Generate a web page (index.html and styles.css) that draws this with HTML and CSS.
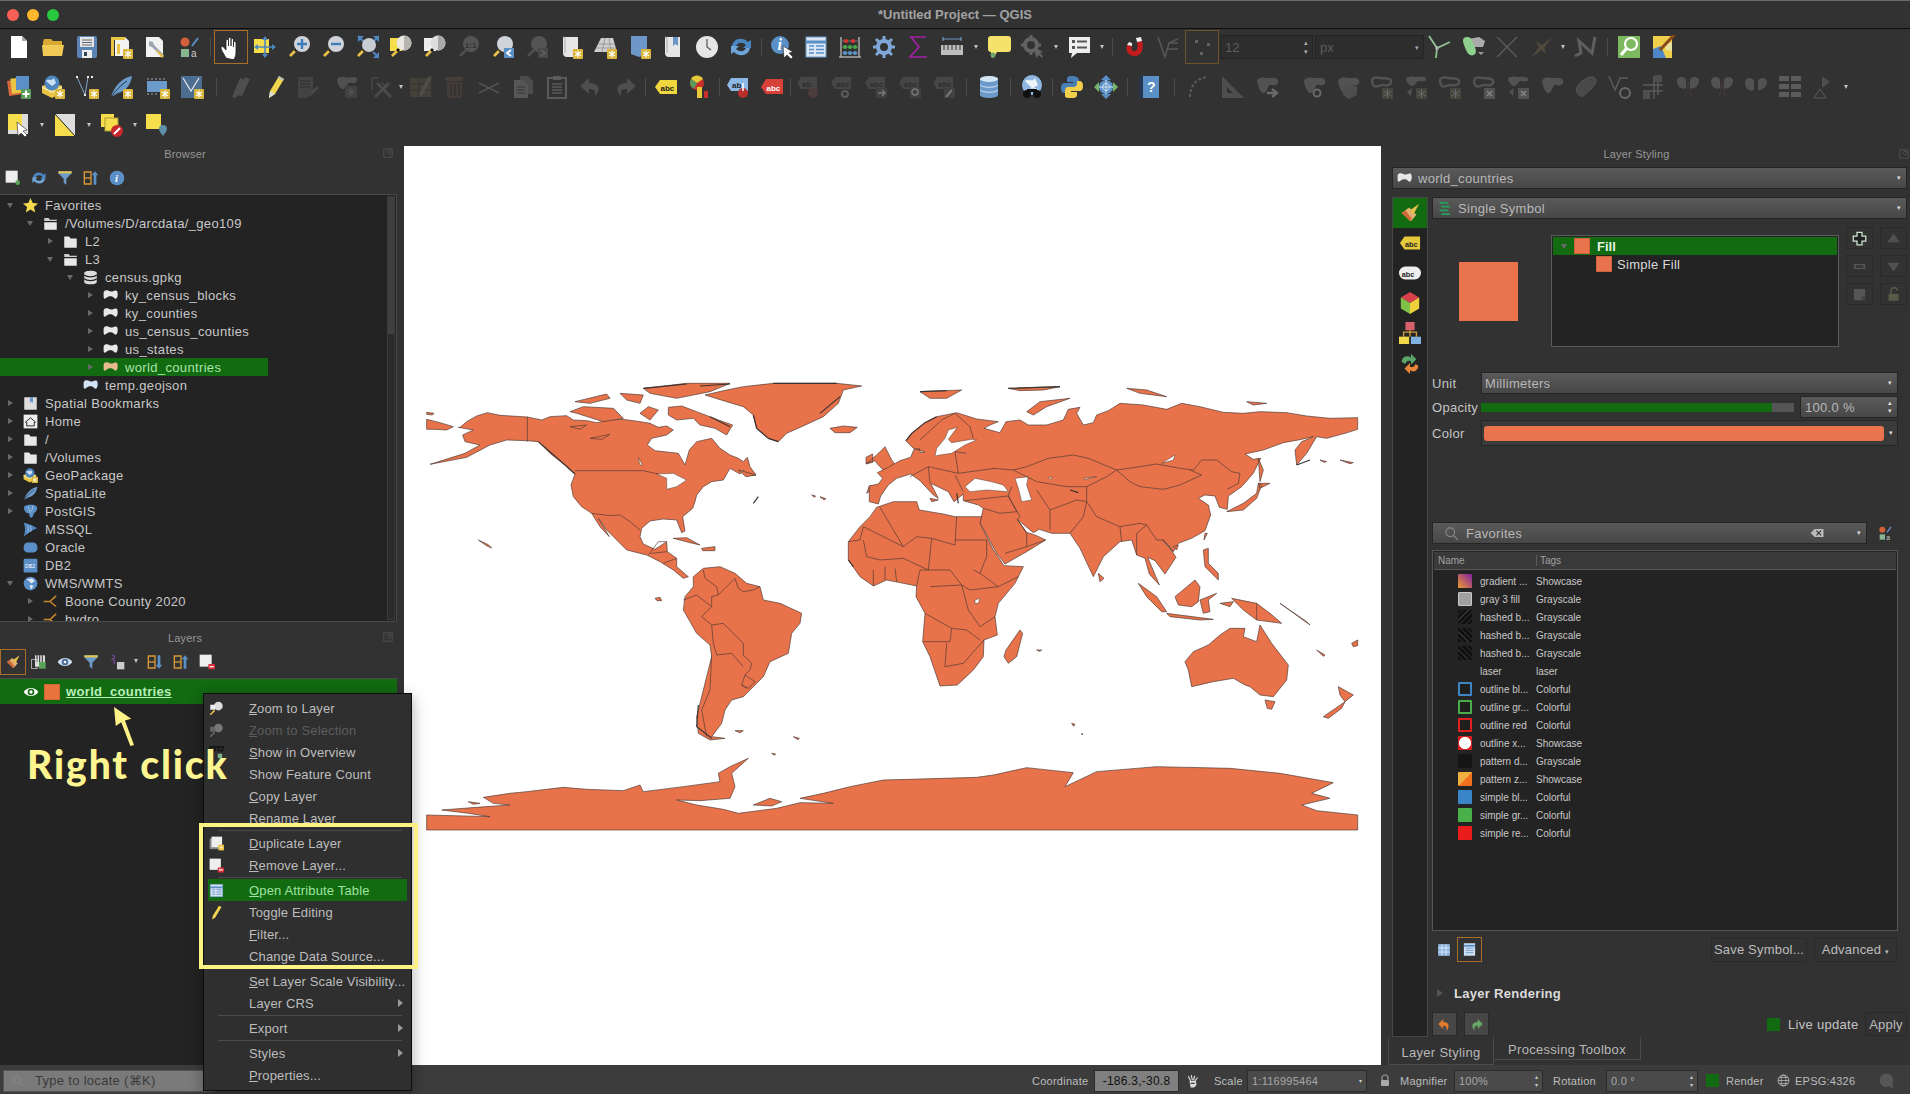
FILE: index.html
```html
<!DOCTYPE html>
<html lang="en">
<head>
    <meta charset="UTF-8">
    <title>*Untitled Project — QGIS</title>
    <link rel="stylesheet" href="styles.css">
</head>
<body>
<svg class="defs" aria-hidden="true">
    <defs>
        <g id="bdg"><rect x="14" y="14" width="10" height="10" rx="1" fill="#d9b63a"/><path d="M19 15.5v7M16 17l6 4M22 17l-6 4" stroke="#fff" stroke-width="1.2"/></g>
        <path id="blobp" d="M2 7c0-4 5-5 8-4s5 0 8 0 5 3 4 6-4 3-6 2-3 1-4 4-3 6-5 5-5-9-5-13z"/>
        <g id="glass"><path d="M9 15l-6 6" stroke="#e8c14a" stroke-width="2.6"/><path d="M10 14l-2 2" stroke="#111" stroke-width="2.6"/></g>
    </defs>
    <symbol id="i-new" viewBox="0 0 24 24"><path d="M4 1h11l5 5v17H4z" fill="#fff"/><path d="M15 1v5h5z" fill="#aaa"/></symbol>
    <symbol id="i-open" viewBox="0 0 24 24"><path d="M2 7l1-3h7l2 2h9v4H2z" fill="#d9a932"/><path d="M1 10h22l-2 11H2z" fill="#f2cb57"/></symbol>
    <symbol id="i-save" viewBox="0 0 24 24"><rect x="2" y="1" width="20" height="22" rx="2" fill="#5b83b3"/><rect x="5" y="2" width="14" height="10" fill="#e6e6e6"/><path d="M7 5h10M7 7.5h10M7 10h10" stroke="#667" stroke-width="1"/><rect x="7" y="15" width="10" height="8" fill="#eee"/><rect x="9" y="17" width="3" height="4" fill="#345"/></symbol>
    <symbol id="i-print" viewBox="0 0 24 24"><path d="M6 2h10l4 4v15H6z" fill="#f4f4f4"/><path d="M2 2h14v3H5v16H2z" fill="#e9c445"/><path d="M8 9h3v10H8z" fill="#e9c445"/><use href="#bdg"/></symbol>
    <symbol id="i-tools" viewBox="0 0 24 24"><path d="M3 2h13l4 4v16H3z" fill="#f2f2f2"/><path d="M6 6l4 1 1 3 10 10-2 2-10-10-3-1z" fill="#9ca3ad"/><path d="M14 15l7 6-2 2-6-7z" fill="#e2bf4b"/></symbol>
    <symbol id="i-style" viewBox="0 0 24 24"><circle cx="8" cy="7" r="4.5" fill="#d2603a"/><rect x="4" y="14" width="8" height="8" fill="#86b58e"/><path d="M15 11l6-8" stroke="#5e8fc4" stroke-width="2"/></symbol>
    <symbol id="i-pan" viewBox="0 0 24 24"><path d="M7 23C5 19 2 15 2 13c0-2 2-2 3-.5l2 2.5V6c0-2 2.500-2 2.500 0v5-7c0-2 2.500-2 2.500 0v7-6c0-2 2.500-2 2.500 0v7-4c0-2 2.500-2 2.500 0v9c0 4-1 5-2 8z" fill="#fff" stroke="#222" stroke-width=".8"/></symbol>
    <symbol id="i-pansel" viewBox="0 0 24 24"><rect x="1" y="4" width="15" height="14" fill="#f6dd4b"/><path d="M12 1l3 4H9zM12 23l3-4H9zM1 12l4-3v6zM23 12l-4-3v6z" fill="#4f86c0"/><path d="M12 5v14M5 12h14" stroke="#4f86c0" stroke-width="1.6"/></symbol>
    <symbol id="i-zin" viewBox="0 0 24 24"><use href="#glass"/><circle cx="15" cy="9" r="8" fill="#cfd3da"/><path d="M15 4v10M10 9h10" stroke="#3f7dbd" stroke-width="2.400"/></symbol>
    <symbol id="i-zout" viewBox="0 0 24 24"><use href="#glass"/><circle cx="15" cy="9" r="8" fill="#cfd3da"/><path d="M10 9h10" stroke="#3f7dbd" stroke-width="2.400"/></symbol>
    <symbol id="i-zfull" viewBox="0 0 24 24"><path d="M3 1h6L3 7zM24 1h-6l6 6zM24 17v6h-6z" fill="#4f86c0"/><path d="M3 1l6 6M24 1l-6 6M24 23l-6-6" stroke="#4f86c0" stroke-width="2"/><use href="#glass"/><circle cx="14" cy="10" r="7" fill="#c8ccd3"/></symbol>
    <symbol id="i-zsel" viewBox="0 0 24 24"><rect x="1" y="3" width="12" height="13" fill="#f6dd4b"/><use href="#glass"/><circle cx="15" cy="8" r="7.500" fill="#e8e8e0"/><path d="M15 .5a7.500 7.500 0 0 1 0 15z" fill="#b5b5ae"/></symbol>
    <symbol id="i-zlayer" viewBox="0 0 24 24"><rect x="1" y="3" width="12" height="13" fill="#eee"/><use href="#glass"/><circle cx="15" cy="8" r="7.500" fill="#ddd"/><path d="M15 .5a7.500 7.500 0 0 1 0 15z" fill="#aaa"/></symbol>
    <symbol id="i-znat" viewBox="0 0 24 24"><g opacity=".33"><path d="M9 15l-6 6" stroke="#888" stroke-width="2.600"/><circle cx="14" cy="9" r="8" fill="#999"/></g></symbol>
    <symbol id="i-zlast" viewBox="0 0 24 24"><use href="#glass"/><circle cx="14" cy="9" r="8" fill="#cfd3da"/><rect x="13" y="13" width="10" height="10" fill="#5b8fc7"/><path d="M20 15l-4 3 4 3" stroke="#fff" stroke-width="1.800" fill="none"/></symbol>
    <symbol id="i-znext" viewBox="0 0 24 24"><g opacity=".33"><path d="M9 15l-6 6" stroke="#888" stroke-width="2.600"/><circle cx="14" cy="9" r="8" fill="#999"/><rect x="13" y="13" width="10" height="10" fill="#777"/><path d="M16 15l4 3-4 3" stroke="#bbb" stroke-width="1.800" fill="none"/></g></symbol>
    <symbol id="i-scroll" viewBox="0 0 24 24"><path d="M4 2h15v20H8c-3 0-4-2-4-4z" fill="#e6e6e6"/><path d="M4 2c2 0 2 2 2 4v12" stroke="#aaa" fill="none"/></symbol>
    <symbol id="i-newmap" viewBox="0 0 24 24"><use href="#i-scroll" width="24" height="24"/><use href="#bdg"/></symbol>
    <symbol id="i-3d" viewBox="0 0 24 24"><path d="M8 3h12l4 14H1z" fill="#cfcfcf"/><path d="M12 3l-3 14M16 3l2 14M5 9h17M3 13h20" stroke="#888" stroke-width=".7"/><use href="#bdg"/></symbol>
    <symbol id="i-bookadd" viewBox="0 0 24 24"><path d="M4 1h16v18l-8 3-8-3z" fill="#6e97c9"/><use href="#bdg"/></symbol>
    <symbol id="i-book" viewBox="0 0 24 24"><use href="#i-scroll" width="24" height="24"/><path d="M12 2h5v9l-2.500-2-2.500 2z" fill="#6a95c9"/></symbol>
    <symbol id="i-clock" viewBox="0 0 24 24"><circle cx="12" cy="12" r="11" fill="#e6e6e6"/><path d="M12 4v8l4 3" stroke="#555" stroke-width="1.200" fill="none"/></symbol>
    <symbol id="i-refresh" viewBox="0 0 24 24"><path d="M3 11C4 4 13 1 19 7l3-2v8h-8l3-3c-4-4-9-2-10 1z" fill="#4a86c2"/><path d="M21 13c-1 7-10 10-16 4l-3 2v-8h8l-3 3c4 4 9 2 10-1z" fill="#6fa6da"/></symbol>
    <symbol id="i-id" viewBox="0 0 24 24"><circle cx="10" cy="10" r="9" fill="#5b8fc7"/><path d="M13 11l1 12 3-3 4 4 2-2-4-4 4-1z" fill="#fff" stroke="#222" stroke-width=".6"/></symbol>
    <symbol id="i-table" viewBox="0 0 24 24"><rect x="2" y="2" width="20" height="20" fill="#dbe7f4" stroke="#6c9bcb"/><path d="M2 7h20" stroke="#5b8fc7" stroke-width="3"/><path d="M5 11h5M12 11h8M5 14.500h5M12 14.500h8M5 18h5M12 18h8" stroke="#5b8fc7" stroke-width="1.400"/></symbol>
    <symbol id="i-abacus" viewBox="0 0 24 24"><path d="M3 2v20M21 2v20M1 22h22" stroke="#aaa" stroke-width="1.500"/><path d="M3 6h18M3 12h18M3 18h18" stroke="#777"/><path d="M8 6h.1M15 6h.1" stroke="#d33" stroke-width="4" stroke-linecap="round"/><path d="M7 12h.1M12 12h.1M17 12h.1" stroke="#4a4" stroke-width="4" stroke-linecap="round"/><path d="M7 18h.1M12 18h.1M17 18h.1" stroke="#59c" stroke-width="4" stroke-linecap="round"/></symbol>
    <symbol id="i-gear" viewBox="0 0 24 24"><circle cx="12" cy="12" r="6" fill="none" stroke="#7fa8d8" stroke-width="4"/><path d="M12 1v5M12 18v5M1 12h5M18 12h5M4 4l4 4M16 16l4 4M20 4l-4 4M8 16l-4 4" stroke="#7fa8d8" stroke-width="3"/></symbol>
    <symbol id="i-sigma" viewBox="0 0 24 24"><path d="M20 2H5l8 10-9 10h17" fill="none" stroke="#a321a8" stroke-width="1.700"/></symbol>
    <symbol id="i-ruler" viewBox="0 0 24 24"><path d="M3 4h18M3 2v4M21 2v4" stroke="#6e97c9" stroke-width="1.200"/><rect x="1" y="10" width="22" height="10" fill="#bdbdbd"/><path d="M4 10v5M8 10v5M12 10v5M16 10v5M20 10v5" stroke="#333"/></symbol>
    <symbol id="i-note" viewBox="0 0 24 24"><path d="M4 1h17c2 0 3 1 3 3v10c0 2-1 3-3 3H10l-3 5c-1 1-3 1-3-1v-4c-2 0-3-1-3-3V4c0-2 1-3 3-3z" fill="#f5e26b"/><circle cx="6" cy="20" r="2.500" fill="#6fa56d"/></symbol>
    <symbol id="i-gearrun" viewBox="0 0 24 24"><g opacity=".4"><circle cx="10" cy="10" r="6" fill="none" stroke="#aaa" stroke-width="4"/><path d="M10 0v4M10 16v4M0 10h4M16 10h4" stroke="#aaa" stroke-width="3"/><path d="M13 12l2 11 3-3 3 3 1-2-3-3 3-1z" fill="#aaa"/></g></symbol>
    <symbol id="i-txtnote" viewBox="0 0 24 24"><path d="M2 2h21v16H10l-6 5 1-5H2z" fill="#eee"/><rect x="5" y="5" width="3" height="3" fill="#555"/><rect x="5" y="11" width="3" height="3" fill="#555"/><path d="M10 6.500h10M10 12.500h10" stroke="#555" stroke-width="2"/></symbol>
    <symbol id="i-magnet" viewBox="0 0 24 24"><path d="M5 10c-2 6 2 12 9 11 6-1 8-8 6-15l-5 1c1 4 1 8-2 9-3 1-4-3-3-5z" fill="#c41c1c"/><path d="M15 7l5-1-1-4-5 1zM5 10l5 1 0-3-3-1z" fill="#eee"/></symbol>
    <symbol id="i-vtx" viewBox="0 0 24 24"><g stroke="#777" fill="none" stroke-width="1.500" opacity=".55"><path d="M2 2l7 20 4-14 9-4M13 8h9M11 14h11"/></g></symbol>
    <symbol id="i-dots" viewBox="0 0 24 24"><g fill="#777" opacity=".7"><rect x="5" y="5" width="3" height="3"/><rect x="17" y="8" width="3" height="3"/><rect x="10" y="17" width="3" height="3"/></g></symbol>
    <symbol id="i-spokes" viewBox="0 0 24 24"><path d="M2 1l8 12 13-6M10 13l-1 10" stroke="#8fc48f" stroke-width="1.800" fill="none"/><circle cx="10" cy="13" r="2" fill="#aaa"/></symbol>
    <symbol id="i-greenblob" viewBox="0 0 24 24"><path d="M8 4l10-2 6 4-2 6-12 0z" fill="#aaa"/><path d="M2 5c0-4 8-4 9 0s6 11 3 14-7 1-9-4-3-7-3-10z" fill="#8fd08f"/><path d="M17 17h6l-3 3z" fill="#999"/></symbol>
    <symbol id="i-cross" viewBox="0 0 24 24"><path d="M2 2l20 20M22 2L2 22" stroke="#5a5a5a" stroke-width="1.500"/></symbol>
    <symbol id="i-star4" viewBox="0 0 24 24"><path d="M2 23l8-11-3-6 6 4 10-8-8 11 3 6-6-4z" fill="#4f4a3c"/></symbol>
    <symbol id="i-zz" viewBox="0 0 24 24"><path d="M2 21l6-3-2-12 13 12 3-16" fill="none" stroke="#5f5f5f" stroke-width="3"/></symbol>
    <symbol id="i-search" viewBox="0 0 24 24"><rect x="1" y="1" width="22" height="22" fill="#7dba5f"/><circle cx="14" cy="9" r="6" fill="#7dba5f" stroke="#fff" stroke-width="2.200"/><path d="M10 13l-6 7" stroke="#fff" stroke-width="3"/></symbol>
    <symbol id="i-mapedit" viewBox="0 0 24 24"><rect x="2" y="1" width="19" height="22" fill="#f0cf4a"/><path d="M2 14l8-3 5 12H2z" fill="#4e86c8"/><path d="M14 8h7v8l-6-1z" fill="#e9e3a0"/><path d="M9 15L23 0" stroke="#8a4a1a" stroke-width="3"/></symbol>

    <symbol id="i-addlayers" viewBox="0 0 24 24"><rect x="1" y="5" width="14" height="15" fill="#d66a3a" transform="rotate(-8 8 12)"/><rect x="4" y="3" width="14" height="15" fill="#e9c445" transform="rotate(-6 11 10)"/><rect x="9" y="1" width="13" height="14" fill="#5b8fc7"/><rect x="14" y="14" width="10" height="10" rx="1" fill="#5a9a5a"/><path d="M19 15.500v7M15.500 19h7" stroke="#fff" stroke-width="2"/></symbol>
    <symbol id="i-gpk" viewBox="0 0 24 24"><path d="M1 11l10-4 10 4v7l-10 5-10-5z" fill="#e9c445"/><path d="M1 11l10 5 10-5v2l-10 5-10-5z" fill="#f7e9a4"/><circle cx="11" cy="8" r="7.500" fill="#4f86c0"/><path d="M5 6c3-3 5 1 8-3l2 5-4 3z" fill="#cfe0f2"/><use href="#bdg"/></symbol>
    <symbol id="i-pts" viewBox="0 0 24 24"><path d="M2 2l8 18 3-18" stroke="#8fb2d9" stroke-width=".9" fill="none"/><g fill="#eee"><rect x="1" y="1" width="2" height="2"/><rect x="12" y="1" width="2" height="2"/><rect x="16" y="1" width="2" height="2"/><rect x="9" y="19" width="2" height="2"/></g><use href="#bdg"/></symbol>
    <symbol id="i-feather" viewBox="0 0 24 24"><path d="M2 22C5 12 12 3 23 1c-1 7-5 15-14 17z" fill="#6c9bcb"/><path d="M2 22C8 14 12 10 18 6" stroke="#234" fill="none"/></symbol>
    <symbol id="i-feath2" viewBox="0 0 24 24"><use href="#i-feather" width="24" height="24"/><use href="#bdg"/></symbol>
    <symbol id="i-mem" viewBox="0 0 24 24"><path d="M2 3v2M6 3v2M10 3v2M14 3v2M18 3v2M2 18v2M6 18v2M10 18v2" stroke="#9ab" /><rect x="1" y="6" width="20" height="11" fill="#6c9bcb"/><use href="#bdg"/></symbol>
    <symbol id="i-vlayer" viewBox="0 0 24 24"><rect x="1" y="1" width="21" height="22" fill="#4d6e93"/><path d="M3 3l8 13 8-13" stroke="#e8e8e8" stroke-width="1.200" fill="none"/><use href="#bdg"/></symbol>
    <symbol id="i-pens" viewBox="0 0 24 24"><path d="M4 22L12 3l5 2-9 18zM9 20L17 2l5 2-8 17z" fill="#555"/></symbol>
    <symbol id="i-pencil" viewBox="0 0 24 24"><path d="M7 23l1-7L17 1l5 3-9 15z" fill="#f2d54f"/><path d="M7 23l1-7 5 3z" fill="#ddd"/><path d="M17 1l5 3-1 2-5-3z" fill="#bbb"/></symbol>
    <symbol id="i-dsave" viewBox="0 0 24 24"><g opacity=".55"><path d="M2 2h15v14l-6 7H2z" fill="#5a5a5a"/><path d="M4 6h10M4 9h10M4 12h10" stroke="#3a3a3a" stroke-width="1.400"/><path d="M12 22l3-5 6-6 2 2-6 6z" fill="#666"/></g></symbol>
    <symbol id="i-dadd" viewBox="0 0 24 24"><g opacity=".55"><use href="#blobp" fill="#777" transform="scale(1 .7)"/><rect x="10" y="11" width="12" height="12" fill="#555"/><path d="M16 13v8M12.500 15l7 4M19.500 15l-7 4" stroke="#888"/></g></symbol>
    <symbol id="i-dvtx" viewBox="0 0 24 24"><g opacity=".6"><path d="M3 3h6M3 3v12M12 8l7 4" stroke="#777" stroke-width="1"/><path d="M6 22l14-14M8 8l14 14" stroke="#6a6a6a" stroke-width="2.500"/></g></symbol>
    <symbol id="i-dedit" viewBox="0 0 24 24"><g opacity=".65"><rect x="1" y="3" width="21" height="19" fill="#55503f"/><path d="M1 9h21M1 15h21M10 3v19" stroke="#323232"/><path d="M10 22l4-3 9-17-3-1-9 16z" fill="#6a6a5a"/></g></symbol>
    <symbol id="i-dbin" viewBox="0 0 24 24"><g opacity=".6"><path d="M2 2h18v4H2z" fill="#5a4a44"/><path d="M4 7h15v16H4z" fill="#57463f"/><path d="M8 9v12M12 9v12M16 9v12" stroke="#323232" stroke-width="1.500"/></g></symbol>
    <symbol id="i-dcut" viewBox="0 0 24 24"><path d="M2 8l20 10M2 18l20-10" stroke="#5a5a5a" stroke-width="1.600"/></symbol>
    <symbol id="i-dcopy" viewBox="0 0 24 24"><g fill="#666" opacity=".9"><path d="M9 1h8l5 5v13H9z" opacity=".7"/><path d="M3 5h9l5 5v13H3z"/></g><path d="M6 12h8M6 15h8M6 18h8" stroke="#323232"/></symbol>
    <symbol id="i-dpaste" viewBox="0 0 24 24"><rect x="3" y="3" width="18" height="20" fill="none" stroke="#666" stroke-width="2"/><rect x="8" y="1" width="8" height="4" fill="#666"/><path d="M7 9h10M7 12h10M7 15h10M7 18h10" stroke="#666" stroke-width="1.400"/></symbol>
    <symbol id="i-dundo" viewBox="0 0 24 24"><path d="M10 3L1 11l9 8v-5c5 0 7 2 6 7 5-4 6-13-6-13z" fill="#555"/></symbol>
    <symbol id="i-dredo" viewBox="0 0 24 24"><path d="M14 3l9 8-9 8v-5c-5 0-7 2-6 7-5-4-6-13 6-13z" fill="#555"/></symbol>
    <symbol id="i-labely" viewBox="0 0 24 24"><path d="M6 5h17v14H6l-5-7z" fill="#f0d63f"/></symbol>
    <symbol id="i-pie" viewBox="0 0 24 24"><circle cx="9" cy="8" r="7" fill="#c8302c"/><path d="M9 8L3 4a7 7 0 0 1 12 0z" fill="#e6c93a"/><path d="M9 8L3 4a7 7 0 0 0 3 10z" fill="#5a9a5a"/><rect x="9" y="12" width="5" height="11" fill="#e6c93a"/><rect x="16" y="16" width="4" height="7" fill="#c8302c"/></symbol>
    <symbol id="i-labelb" viewBox="0 0 24 24"><path d="M5 3h17v13H5l-4-6z" fill="#8cb8e6"/><circle cx="17" cy="18" r="5" fill="#b8302c"/><path d="M17 8v8" stroke="#fff" stroke-width="1.500"/></symbol>
    <symbol id="i-labelr" viewBox="0 0 24 24"><path d="M6 4h17v15H6l-5-7z" fill="#d8403a"/></symbol>
    <symbol id="i-dlab" viewBox="0 0 24 24"><g opacity=".5"><path d="M5 2h16v12H5L1 8z" fill="#666"/></g></symbol>
    <symbol id="i-dlab1" viewBox="0 0 24 24"><use href="#i-dlab" width="24" height="24"/><circle cx="17" cy="18" r="5" fill="#554040"/></symbol>
    <symbol id="i-dlab2" viewBox="0 0 24 24"><use href="#i-dlab" width="24" height="24"/><circle cx="15" cy="19" r="3" fill="none" stroke="#666" stroke-width="2"/></symbol>
    <symbol id="i-dlab3" viewBox="0 0 24 24"><use href="#i-dlab" width="24" height="24"/><rect x="12" y="13" width="11" height="10" fill="#444"/><path d="M14 18h7M18 15l3 3-3 3" stroke="#888" stroke-width="1.500" fill="none"/></symbol>
    <symbol id="i-dlab4" viewBox="0 0 24 24"><use href="#i-dlab" width="24" height="24"/><rect x="12" y="13" width="11" height="10" fill="#444"/><circle cx="17" cy="17" r="3" fill="none" stroke="#888" stroke-width="1.500"/></symbol>
    <symbol id="i-dlab5" viewBox="0 0 24 24"><use href="#i-dlab" width="24" height="24"/><rect x="12" y="13" width="11" height="10" fill="#444"/><path d="M14 22l6-7" stroke="#888" stroke-width="2"/></symbol>
    <symbol id="i-db" viewBox="0 0 24 24"><path d="M3 4c0-4 18-4 18 0v16c0 4-18 4-18 0z" fill="#6c9bcb"/><ellipse cx="12" cy="4" rx="9" ry="3" fill="#d5e4f3"/><path d="M3 10c3 3 15 3 18 0M3 15c3 3 15 3 18 0" stroke="#d5e4f3" fill="none"/></symbol>
    <symbol id="i-globe" viewBox="0 0 24 24"><circle cx="12" cy="10" r="10" fill="#8fb7e0"/><path d="M5 6c3-3 7 2 10-3l3 7-6 4-2-3zM14 13l4 1-3 4z" fill="#eef3f8"/><circle cx="7" cy="19" r="4" fill="#111"/><circle cx="17" cy="19" r="4" fill="#111"/><rect x="7" y="14" width="10" height="3" fill="#111"/></symbol>
    <symbol id="i-python" viewBox="0 0 24 24"><path d="M12 1C7 1 7 3 7 5v2h6v1H5C2 8 1 10 1 13s1 5 4 5h2v-3c0-2 2-3 4-3h5c2 0 3-2 3-3V5c0-2-3-4-7-4z" fill="#4a7fb5"/><path d="M12 23c5 0 5-2 5-4v-2h-6v-1h8c3 0 4-2 4-5s-1-5-4-5h-2v3c0 2-2 3-4 3H8c-2 0-3 2-3 3v6c0 2 3 2 7 2z" fill="#f0cf4a"/></symbol>
    <symbol id="i-diamond" viewBox="0 0 24 24"><path d="M12 0l5 5H7zM12 24l5-5H7z" fill="#5b8fc7"/><path d="M0 12l5-5v10zM24 12l-5-5v10z" fill="#76b56a"/><circle cx="12" cy="12" r="7" fill="#5b8fc7"/><path d="M5 12h14M12 5v14" stroke="#cfe0f2"/><circle cx="12" cy="12" r="3.500" fill="none" stroke="#cfe0f2"/></symbol>
    <symbol id="i-help" viewBox="0 0 24 24"><rect x="2" y="1" width="20" height="22" fill="#24374e"/><rect x="6" y="1" width="16" height="22" fill="#5b8fc7"/></symbol>
    <symbol id="i-darc" viewBox="0 0 24 24"><path d="M3 22C3 12 8 3 21 2" stroke="#666" stroke-width="2" stroke-dasharray="3 2" fill="none"/></symbol>
    <symbol id="i-dtri" viewBox="0 0 24 24"><path d="M1 1v22h22zM6 12v6h6z" fill="#555" fill-rule="evenodd"/></symbol>
    <symbol id="i-dblob" viewBox="0 0 24 24"><use href="#blobp" fill="#5a5a5a" transform="scale(1.050 .9)"/></symbol>
    <symbol id="i-dblobarrow" viewBox="0 0 24 24"><use href="#i-dblob" width="24" height="24"/><path d="M12 18h9M17 14l5 4-5 4" stroke="#777" stroke-width="2.400" fill="none"/></symbol>
    <symbol id="i-dblobcirc" viewBox="0 0 24 24"><use href="#i-dblob" width="24" height="24"/><circle cx="15" cy="18" r="3.500" fill="none" stroke="#777" stroke-width="2"/></symbol>
    <symbol id="i-dhex" viewBox="0 0 24 24"><use href="#i-dblob" width="24" height="24"/><path d="M13 8l8 4v8l-8 4-6-4v-7z" fill="#555"/></symbol>
    <symbol id="i-dring" viewBox="0 0 24 24"><path d="M2 6c0-4 5-4 8-3s10-1 11 3-5 5-7 4-8 3-10 1-2-3-2-5z" fill="none" stroke="#5a5a5a" stroke-width="2.500"/><rect x="12" y="13" width="11" height="11" fill="#4a4a40"/><path d="M17.500 14v9M13.500 16l8 5M21.500 16l-8 5" stroke="#777"/></symbol>
    <symbol id="i-dpart" viewBox="0 0 24 24"><use href="#blobp" fill="#5a5a5a" transform="scale(1 .55)"/><path d="M3 17l5-4-1 8z" fill="#5a5a5a"/><rect x="12" y="13" width="11" height="11" fill="#4a4a40"/><path d="M17.500 14v9M13.500 16l8 5M21.500 16l-8 5" stroke="#777"/></symbol>
    <symbol id="i-dringx" viewBox="0 0 24 24"><path d="M2 6c0-4 5-4 8-3s10-1 11 3-5 5-7 4-8 3-10 1-2-3-2-5z" fill="none" stroke="#5a5a5a" stroke-width="2.500"/><rect x="12" y="13" width="11" height="11" fill="#5a5a5a"/><path d="M15 16l5 5M20 16l-5 5" stroke="#999" stroke-width="1.500"/></symbol>
    <symbol id="i-dpartx" viewBox="0 0 24 24"><use href="#blobp" fill="#5a5a5a" transform="scale(1 .55)"/><path d="M3 17l5-4-1 8z" fill="#5a5a5a"/><rect x="12" y="13" width="11" height="11" fill="#5a5a5a"/><path d="M15 16l5 5M20 16l-5 5" stroke="#999" stroke-width="1.500"/></symbol>
    <symbol id="i-dbean" viewBox="0 0 24 24"><path d="M3 17c-3-5 6-13 13-15 5-1 8 3 5 7-3 5-8 9-12 12-3 1-5-1-6-4z" fill="#4f4f4f" stroke="#5f5f5f"/></symbol>
    <symbol id="i-dnode" viewBox="0 0 24 24"><path d="M1 1l6 14 5-12h8" stroke="#666" stroke-width="1.500" fill="none"/><circle cx="17" cy="18" r="5" fill="none" stroke="#777" stroke-width="2"/></symbol>
    <symbol id="i-dsnap" viewBox="0 0 24 24"><path d="M12 1v23M1 10h20M1 16h20M16 4v16" stroke="#666" stroke-width="1.500"/><rect x="13" y="0" width="7" height="7" fill="#555"/><rect x="1" y="17" width="7" height="7" fill="#555"/></symbol>
    <symbol id="i-dsci" viewBox="0 0 24 24"><path d="M1 6c0-5 8-5 9-1v8c-3 2-9 0-9-7zM14 5c1-4 9-4 9 1s-6 9-9 7z" fill="#5a5a5a"/><path d="M9 23l3-16M15 23l-3-16" stroke="#4a3a3a" stroke-width="1.200"/></symbol>
    <symbol id="i-dsplit" viewBox="0 0 24 24"><path d="M1 7c0-5 8-5 9-1v9c-3 2-9 0-9-8zM14 6c1-4 9-4 9 1s-6 9-9 8z" fill="#5a5a5a"/></symbol>
    <symbol id="i-dgrid" viewBox="0 0 24 24"><path d="M1 1h10v5H1zM13 1h10v5H13zM1 9h10v5H1zM13 9h10v5H13zM1 17h10v5H1zM13 17h10v5H13z" fill="#666"/></symbol>
    <symbol id="i-dplay" viewBox="0 0 24 24"><path d="M10 1l8 6-8 6z" fill="#555"/><path d="M8 14L2 23h12z" fill="none" stroke="#666"/></symbol>
    <symbol id="i-selrect" viewBox="0 0 24 24"><rect x="1" y="1" width="20" height="20" fill="#ddd"/><rect x="1" y="1" width="14" height="16" fill="#f6dd4b"/><path d="M10 9l1 14 3-3 4 4 2-2-4-4 4-1z" fill="#fff" stroke="#222" stroke-width=".6"/></symbol>
    <symbol id="i-selinv" viewBox="0 0 24 24"><rect x="2" y="1" width="20" height="22" fill="#ddd"/><path d="M2 1l20 22H2z" fill="#f6dd4b"/><path d="M2 1l20 22" stroke="#222"/></symbol>
    <symbol id="i-seloff" viewBox="0 0 24 24"><rect x="1" y="1" width="13" height="13" fill="#f6dd4b"/><rect x="5" y="5" width="13" height="13" fill="#f6dd4b" stroke="#a93"/><circle cx="17" cy="18" r="6" fill="#c8282c"/><path d="M14 21l6-6" stroke="#fff" stroke-width="2"/></symbol>
    <symbol id="i-selloc" viewBox="0 0 24 24"><rect x="1" y="1" width="15" height="15" fill="#f6dd4b"/><path d="M18 23c-2-3-4-5-4-7a4 4 0 0 1 8 0c0 2-2 4-4 7z" fill="#5f8fa8"/></symbol>

    <symbol id="i-add" viewBox="0 0 24 24"><rect x="1" y="1" width="18" height="18" fill="#eee"/><circle cx="19" cy="19" r="3.500" fill="#5aa55a"/></symbol>
    <symbol id="i-filter" viewBox="0 0 24 24"><path d="M2 2h20v3l-8 8v9l-4-3v-6L2 5z" fill="#6c9bcb"/><path d="M2 2h20v3H2z" fill="#e9c445"/></symbol>
    <symbol id="i-collapse" viewBox="0 0 24 24"><path d="M2 3h10v18H2z" fill="none" stroke="#d89a3a" stroke-width="2"/><path d="M2 12h10" stroke="#d89a3a" stroke-width="2"/><path d="M18 2l5 6h-3v14h-4V8h-3z" fill="#5b8fc7"/></symbol>
    <symbol id="i-expand" viewBox="0 0 24 24"><path d="M2 3h10v18H2z" fill="none" stroke="#d89a3a" stroke-width="2"/><path d="M2 12h10" stroke="#d89a3a" stroke-width="2"/><path d="M18 22l5-6h-3V2h-4v14h-3z" fill="#5b8fc7"/></symbol>
    <symbol id="i-info" viewBox="0 0 24 24"><circle cx="12" cy="12" r="11" fill="#5b8fc7"/></symbol>
    <symbol id="i-brush" viewBox="0 0 24 24"><path d="M3 12l8-6 8 8-6 7z" fill="#e0b070"/><path d="M3 12l4-3 7 9-2 3z" fill="#d06a3a"/><path d="M12 9l10-7-6 11z" fill="#e8c14a"/></symbol>
    <symbol id="i-legend" viewBox="0 0 24 24"><rect x="6" y="2" width="15" height="17" fill="#ddd"/><path d="M9 2v10M13 2v10M17 2v10" stroke="#333" stroke-width="1.600"/><rect x="1" y="8" width="8" height="14" fill="none" stroke="#ddd"/><rect x="12" y="12" width="10" height="10" fill="#5aa55a"/></symbol>
    <symbol id="i-eye" viewBox="0 0 24 24"><path d="M1 12c5-8 17-8 22 0-5 8-17 8-22 0z" fill="#cfe0f2"/><circle cx="12" cy="12" r="5" fill="#4a6e96"/><circle cx="12" cy="12" r="2" fill="#fff"/></symbol>
    <symbol id="i-eyew" viewBox="0 0 24 24"><path d="M1 12c5-8 17-8 22 0-5 8-17 8-22 0z" fill="#fff"/><circle cx="12" cy="12" r="5" fill="#126a11"/><circle cx="12" cy="12" r="2.500" fill="#fff"/></symbol>
    <symbol id="i-group" viewBox="0 0 24 24"><path d="M5 2c5 0 3 5 0 6 3 1 5 4 2 7" stroke="#7a4a9a" fill="none" stroke-width="2"/><rect x="12" y="12" width="11" height="11" fill="#ccc"/></symbol>
    <symbol id="i-remove" viewBox="0 0 24 24"><rect x="1" y="1" width="18" height="18" fill="#eee"/><rect x="14" y="15" width="10" height="8" rx="1" fill="#d8303a"/><path d="M16 19h6" stroke="#fff" stroke-width="2"/></symbol>
    <symbol id="i-dup" viewBox="0 0 24 24"><rect x="1" y="4" width="17" height="17" fill="#888"/><rect x="4" y="1" width="17" height="17" fill="#eee"/><rect x="15" y="14" width="9" height="9" fill="#e9c445"/><path d="M19.500 16v5M17 18.500h5" stroke="#fff"/></symbol>
    <symbol id="i-folder" viewBox="0 0 24 24"><path d="M2 4h8l2 3h10v15H2z" fill="#e8e8e8"/></symbol>
    <symbol id="i-folderopen" viewBox="0 0 24 24"><path d="M2 3h7l2 3h11v2H2z" fill="#cfcfcf"/><path d="M2 10h20v12H2z" fill="#e8e8e8"/></symbol>
    <symbol id="i-star" viewBox="0 0 24 24"><path d="M12 0l3.500 8 8.500.8-6.500 5.600 2 8.600L12 18.500 4.500 23l2-8.600L0 8.800 8.500 8z" fill="#f3d94b"/></symbol>
    <symbol id="i-dbw" viewBox="0 0 24 24"><path d="M2 5c0-5 20-5 20 0v14c0 5-20 5-20 0z" fill="#dcdcdc"/><path d="M2 8c4 4 16 4 20 0M2 14c4 4 16 4 20 0" stroke="#232323" stroke-width="2" fill="none"/></symbol>
    <symbol id="i-blobw" viewBox="0 0 24 24"><path d="M1 7c1-4 6-4 10-2s7-2 10-1 3 7 2 10-3 4-5 2-3-3-6-3-5 1-7 3-4 1-4-2 0-5 0-7z" fill="#e8e8e8"/></symbol>
    <symbol id="i-blobt" viewBox="0 0 24 24"><path d="M1 7c1-4 6-4 10-2s7-2 10-1 3 7 2 10-3 4-5 2-3-3-6-3-5 1-7 3-4 1-4-2 0-5 0-7z" fill="#e6b98f"/></symbol>
    <symbol id="i-blobb" viewBox="0 0 24 24"><path d="M1 7c1-4 6-4 10-2s7-2 10-1 3 7 2 10-3 4-5 2-3-3-6-3-5 1-7 3-4 1-4-2 0-5 0-7z" fill="#cfe3f5"/></symbol>
    <symbol id="i-bookm" viewBox="0 0 24 24"><rect x="2" y="2" width="20" height="20" fill="#dedede"/><path d="M11 2h5v9l-2.500-2-2.500 2z" fill="#6a95c9"/></symbol>
    <symbol id="i-home" viewBox="0 0 24 24"><rect x="1" y="1" width="22" height="22" fill="#eee"/><path d="M4 13l8-7 8 7h-2v6H6v-6z" fill="none" stroke="#222" stroke-width="1.500"/></symbol>
    <symbol id="i-elephant" viewBox="0 0 24 24"><path d="M2 4C4 0 20 0 22 4s-1 9-4 10c-1 3-3 8-5 8s-3-4-3-7C5 16 0 9 2 4z" fill="#5b8fc7"/><path d="M8 4c2 3 2 8 4 10M16 3c-1 3-1 7-3 9" stroke="#cfe0f2" fill="none"/></symbol>
    <symbol id="i-mssql" viewBox="0 0 24 24"><path d="M1 1c6 1 17 5 22 9-6 2-15 8-22 13 3-7 3-16 0-22z" fill="#4f86c0"/><path d="M7 4c2 4 2 10 0 14M12 6c1 3 1 7 0 10" stroke="#cfe0f2" fill="none"/></symbol>
    <symbol id="i-oracle" viewBox="0 0 24 24"><rect x="1" y="4" width="22" height="16" rx="7" fill="#5b8fc7"/></symbol>
    <symbol id="i-db2" viewBox="0 0 24 24"><rect x="1" y="1" width="22" height="22" rx="2" fill="#5b8fc7"/></symbol>
    <symbol id="i-wms" viewBox="0 0 24 24"><circle cx="12" cy="12" r="11" fill="#5b8fc7"/><path d="M6 5c3-2 5 2 8-2l5 5-6 4-2-3zM12 14l5 2-4 5-2-4z" fill="#dfeaf5"/></symbol>
    <symbol id="i-fork" viewBox="0 0 24 24"><path d="M1 12h10l10-9M11 12l10 8" stroke="#c98a2e" stroke-width="2.400" fill="none"/></symbol>
    <symbol id="i-plus" viewBox="0 0 24 24"><path d="M8 2h8v6h6v8h-6v6H8v-6H2V8h6z" fill="#222" stroke="#cfe9cf" stroke-width="2"/></symbol>
    <symbol id="i-cat" viewBox="0 0 24 24"><path d="M4 3h14M7 9h14M4 15h14M7 21h14" stroke="#24a05a" stroke-width="3"/></symbol>
    <symbol id="i-labelt" viewBox="0 0 24 24"><path d="M6 5h17v14H6l-5-7z" fill="#e6c93a"/></symbol>
    <symbol id="i-labelw" viewBox="0 0 24 24"><rect x="0" y="5" width="24" height="14" rx="7" fill="#eee"/></symbol>
    <symbol id="i-cube" viewBox="0 0 24 24"><path d="M12 0l10 6-10 6L2 6z" fill="#d8404a"/><path d="M2 6l10 6v12L2 18z" fill="#7fc24a"/><path d="M22 6l-10 6v12l10-6z" fill="#f0d03a"/></symbol>
    <symbol id="i-tree" viewBox="0 0 24 24"><rect x="7" y="0" width="10" height="9" fill="#d8606a"/><path d="M5 16V11h14v5M12 9v7" stroke="#d0a040" stroke-width="1.500" fill="none"/><rect x="0" y="16" width="11" height="8" fill="#f0d84a"/><rect x="13" y="16" width="11" height="8" fill="#7fb2e0"/></symbol>
    <symbol id="i-hist" viewBox="0 0 24 24"><path d="M3 11c0-6 6-8 10-5V2l6 6-6 6v-4c-3-1-5 0-6 3z" fill="#5aa56a"/><path d="M21 15c0 5-5 8-9 5v4l-6-6 6-6v4c3 1 5 0 6-3z" fill="#e8843a"/></symbol>
    <symbol id="i-up" viewBox="0 0 24 24"><path d="M12 4l10 14H2z" fill="#505050"/></symbol>
    <symbol id="i-down" viewBox="0 0 24 24"><path d="M12 20L22 6H2z" fill="#505050"/></symbol>
    <symbol id="i-minus" viewBox="0 0 24 24"><rect x="3" y="8" width="18" height="8" fill="#555"/><rect x="6" y="10" width="12" height="4" fill="#333"/></symbol>
    <symbol id="i-dupd" viewBox="0 0 24 24"><path d="M3 3h18v14h-4v4H3z" fill="#555"/><rect x="15" y="15" width="6" height="6" fill="#444"/></symbol>
    <symbol id="i-lock" viewBox="0 0 24 24"><path d="M8 11V6a5 5 0 0 1 10 0" fill="none" stroke="#5a5a4a" stroke-width="2.400"/><rect x="4" y="11" width="16" height="11" fill="#5a5a4a"/></symbol>
    <symbol id="i-lockw" viewBox="0 0 24 24"><path d="M6 11V7a6 6 0 0 1 12 0v4" fill="none" stroke="#999" stroke-width="2.400"/><rect x="4" y="11" width="16" height="12" rx="2" fill="#aaa"/></symbol>
    <symbol id="i-grid" viewBox="0 0 24 24"><rect x="2" y="2" width="20" height="20" fill="#8fb6e0"/><path d="M2 8.500h20M2 15.500h20M8.500 2v20M15.500 2v20" stroke="#dfeaf5" stroke-width="1.500"/></symbol>
    <symbol id="i-list" viewBox="0 0 24 24"><rect x="3" y="2" width="18" height="20" fill="#cfe0f2"/><path d="M3 6h18" stroke="#5b8fc7" stroke-width="3"/><path d="M6 10h12M6 13.500h12M6 17h12" stroke="#5b8fc7" stroke-width="1.200"/></symbol>
    <symbol id="i-undo" viewBox="0 0 24 24"><path d="M10 3L2 11l8 8v-5c4 0 6 2 5 8 5-5 6-14-5-14z" fill="#e07a2e"/></symbol>
    <symbol id="i-redo" viewBox="0 0 24 24"><path d="M14 3l8 8-8 8v-5c-4 0-6 2-5 8-5-5-6-14 5-14z" fill="#6aa56a"/></symbol>
    <symbol id="i-hand2" viewBox="0 0 24 24"><path d="M4 4l4 8M9 2l2 9M15 3l-2 8M20 6l-5 6" stroke="#ddd" stroke-width="2"/><path d="M6 12h11l1 7-4 4H8z" fill="#ddd"/><path d="M8 16h7" stroke="#333" stroke-width="2"/></symbol>
    <symbol id="i-world" viewBox="0 0 24 24"><circle cx="12" cy="12" r="10" fill="none" stroke="#ccc" stroke-width="1.500"/><ellipse cx="12" cy="12" rx="4.500" ry="10" fill="none" stroke="#ccc" stroke-width="1.200"/><path d="M2 12h20M4 6.500h16M4 17.500h16" stroke="#ccc" stroke-width="1.200"/></symbol>
    <symbol id="i-bubble" viewBox="0 0 24 24"><path d="M12 1a10 10 0 0 1 8 15c0 3 1 5 3 7-4 0-6-1-8-3A10 10 0 1 1 12 1z" fill="#575757"/></symbol>
    <symbol id="i-close" viewBox="0 0 24 24"><rect x="2" y="2" width="20" height="20" fill="none" stroke="#555" stroke-width="2"/><path d="M7 7l10 10M11 6h7v7" stroke="#555" stroke-width="2" fill="none"/></symbol>
    <symbol id="i-mag" viewBox="0 0 24 24"><circle cx="10" cy="10" r="7" fill="none" stroke="#888" stroke-width="1.800"/><path d="M15 15l7 7" stroke="#888" stroke-width="2"/></symbol>
    <symbol id="i-clear" viewBox="0 0 24 24"><path d="M8 5h15v14H8l-7-7z" fill="#bbb"/><path d="M11 8l8 8M19 8l-8 8" stroke="#333" stroke-width="2"/></symbol>
    <symbol id="i-glassw" viewBox="0 0 24 24"><path d="M9 15l-7 7" stroke="#e8c14a" stroke-width="2.400"/><circle cx="15" cy="8" r="7" fill="#ddd"/><rect x="2" y="6" width="8" height="8" fill="#eee"/></symbol>
    <symbol id="i-glassd" viewBox="0 0 24 24"><path d="M9 15l-7 7" stroke="#666" stroke-width="2.400"/><circle cx="15" cy="8" r="7" fill="#777"/><rect x="2" y="6" width="8" height="8" fill="#666"/></symbol>
    <symbol id="i-overview" viewBox="0 0 24 24"><path d="M0 3h24M3 3v6h7V3M15 3v6h7V3" stroke="#111" stroke-width="2" fill="none"/><rect x="14" y="14" width="7" height="7" fill="#7fb28a"/></symbol>
    <symbol id="i-pensm" viewBox="0 0 24 24"><path d="M5 23l1-6L16 1l4 2-10 17z" fill="#f2d54f"/></symbol>
</svg>

<div class="app">
    <header class="titlebar">
        <div class="lights"><span class="light red"></span><span class="light amber"></span><span class="light green"></span></div>
        <div class="wintitle">*Untitled Project — QGIS</div>
    </header>

    <div class="toolbars">
        <div class="bar">
            <svg class="ic"><use href="#i-new"/></svg><svg class="ic"><use href="#i-open"/></svg><svg class="ic"><use href="#i-save"/></svg><svg class="ic"><use href="#i-print"/></svg><svg class="ic"><use href="#i-tools"/></svg>
            <svg class="ic" viewBox="0 0 24 24"><use href="#i-style"/><text x="14" y="22" class="svg-a">a</text></svg>
            <i class="g8 ln"></i>
            <svg class="ic on"><use href="#i-pan"/></svg><svg class="ic"><use href="#i-pansel"/></svg><svg class="ic"><use href="#i-zin"/></svg><svg class="ic"><use href="#i-zout"/></svg><svg class="ic"><use href="#i-zfull"/></svg><svg class="ic"><use href="#i-zsel"/></svg><svg class="ic"><use href="#i-zlayer"/></svg>
            <svg class="ic" viewBox="0 0 24 24"><use href="#i-znat"/><text x="8" y="13" class="svg-o">1:1</text></svg>
            <svg class="ic"><use href="#i-zlast"/></svg><svg class="ic"><use href="#i-znext"/></svg><svg class="ic"><use href="#i-newmap"/></svg><svg class="ic"><use href="#i-3d"/></svg><svg class="ic"><use href="#i-bookadd"/></svg><svg class="ic"><use href="#i-book"/></svg><svg class="ic"><use href="#i-clock"/></svg><svg class="ic"><use href="#i-refresh"/></svg>
            <i class="g7 ln"></i>
            <svg class="ic" viewBox="0 0 24 24"><use href="#i-id"/><text x="7.500" y="15" class="svg-i">i</text></svg>
            <svg class="ic"><use href="#i-table"/></svg><svg class="ic"><use href="#i-abacus"/></svg><svg class="ic"><use href="#i-gear"/></svg><svg class="ic"><use href="#i-sigma"/></svg><svg class="ic"><use href="#i-ruler"/></svg>
            <i class="drop g13"></i>
            <svg class="ic"><use href="#i-note"/></svg><svg class="ic"><use href="#i-gearrun"/></svg>
            <i class="drop g12"></i>
            <svg class="ic"><use href="#i-txtnote"/></svg>
            <i class="drop g12"></i>
            <i class="g9 ln"></i>
            <svg class="ic"><use href="#i-magnet"/></svg><svg class="ic"><use href="#i-vtx"/></svg><svg class="ic on dimbox"><use href="#i-dots"/></svg>
            <div class="tbspin"><span>12</span><b>▴<br>▾</b></div>
            <div class="tbcombo"><span>px</span><b>▾</b></div>
            <svg class="ic ic-l"><use href="#i-spokes"/></svg><svg class="ic"><use href="#i-greenblob"/></svg><svg class="ic"><use href="#i-cross"/></svg><svg class="ic"><use href="#i-star4"/></svg>
            <i class="drop g10"></i>
            <svg class="ic"><use href="#i-zz"/></svg>
            <i class="g10 ln"></i>
            <svg class="ic"><use href="#i-search"/></svg><svg class="ic"><use href="#i-mapedit"/></svg>
        </div>
        <div class="bar bar-2">
            <svg class="ic"><use href="#i-addlayers"/></svg><svg class="ic"><use href="#i-gpk"/></svg><svg class="ic"><use href="#i-pts"/></svg><svg class="ic"><use href="#i-feath2"/></svg>
            <i class="g3"></i>
            <svg class="ic"><use href="#i-mem"/></svg><svg class="ic"><use href="#i-vlayer"/></svg>
            <i class="g14 ln"></i>
            <svg class="ic d"><use href="#i-pens"/></svg><svg class="ic"><use href="#i-pencil"/></svg><svg class="ic d"><use href="#i-dsave"/></svg>
            <i class="g5"></i>
            <svg class="ic d"><use href="#i-dadd"/></svg><svg class="ic d"><use href="#i-dvtx"/></svg>
            <i class="drop g6"></i>
            <svg class="ic d"><use href="#i-dedit"/></svg><svg class="ic d"><use href="#i-dbin"/></svg><svg class="ic d"><use href="#i-dcut"/></svg><svg class="ic d"><use href="#i-dcopy"/></svg><svg class="ic d"><use href="#i-dpaste"/></svg><svg class="ic d"><use href="#i-dundo"/></svg><svg class="ic d"><use href="#i-dredo"/></svg>
            <i class="g7 ln"></i>
            <svg class="ic" viewBox="0 0 24 24"><use href="#i-labely"/><text x="6.500" y="16" class="svg-k">abc</text></svg>
            <svg class="ic"><use href="#i-pie"/></svg>
            <i class="g4 ln"></i>
            <svg class="ic" viewBox="0 0 24 24"><use href="#i-labelb"/><text x="6" y="13" class="svg-k">ab</text></svg>
            <svg class="ic" viewBox="0 0 24 24"><use href="#i-labelr"/><text x="6.500" y="15.500" class="svg-w">abc</text></svg>
            <i class="g2 ln"></i>
            <svg class="ic d" viewBox="0 0 24 24"><use href="#i-dlab1"/><text x="6" y="12" class="svg-m">ab</text></svg>
            <svg class="ic d" viewBox="0 0 24 24"><use href="#i-dlab2"/><text x="6" y="12" class="svg-m">abc</text></svg>
            <svg class="ic d" viewBox="0 0 24 24"><use href="#i-dlab3"/><text x="6" y="12" class="svg-m">abc</text></svg>
            <svg class="ic d" viewBox="0 0 24 24"><use href="#i-dlab4"/><text x="6" y="12" class="svg-m">abc</text></svg>
            <svg class="ic d" viewBox="0 0 24 24"><use href="#i-dlab5"/><text x="6" y="12" class="svg-m">abc</text></svg>
            <i class="g11 ln"></i>
            <svg class="ic"><use href="#i-db"/></svg>
            <i class="g9 ln"></i>
            <svg class="ic"><use href="#i-globe"/></svg>
            <i class="g6 ln"></i>
            <svg class="ic"><use href="#i-python"/></svg><svg class="ic"><use href="#i-diamond"/></svg>
            <i class="g9 ln"></i>
            <svg class="ic" viewBox="0 0 24 24"><use href="#i-help"/><text x="10" y="17" class="svg-q">?</text></svg>
            <i class="g16 ln"></i>
            <svg class="ic d"><use href="#i-darc"/></svg><svg class="ic d"><use href="#i-dtri"/></svg><svg class="ic d"><use href="#i-dblobarrow"/></svg>
            <i class="g13"></i>
            <svg class="ic d"><use href="#i-dblobcirc"/></svg><svg class="ic d"><use href="#i-dhex"/></svg><svg class="ic d"><use href="#i-dring"/></svg><svg class="ic d"><use href="#i-dpart"/></svg><svg class="ic d"><use href="#i-dring"/></svg><svg class="ic d"><use href="#i-dringx"/></svg><svg class="ic d"><use href="#i-dpartx"/></svg><svg class="ic d"><use href="#i-dblob"/></svg><svg class="ic d"><use href="#i-dbean"/></svg><svg class="ic d"><use href="#i-dnode"/></svg><svg class="ic d"><use href="#i-dsnap"/></svg><svg class="ic d"><use href="#i-dsci"/></svg><svg class="ic d"><use href="#i-dsci"/></svg><svg class="ic d"><use href="#i-dsplit"/></svg><svg class="ic d"><use href="#i-dgrid"/></svg><svg class="ic d"><use href="#i-dplay"/></svg>
            <i class="drop g10"></i>
        </div>
        <div class="bar bar-3">
            <svg class="ic"><use href="#i-selrect"/></svg><i class="drop g12"></i><svg class="ic"><use href="#i-selinv"/></svg><i class="drop g13"></i><svg class="ic"><use href="#i-seloff"/></svg><i class="drop g11"></i><svg class="ic"><use href="#i-selloc"/></svg>
        </div>
    </div>

    <div class="main">
        <div class="left">
            <section class="dock browser">
                <div class="dock-title"><span>Browser</span><svg class="dock-close"><use href="#i-close"/></svg></div>
                <div class="minibar">
                    <svg class="mini"><use href="#i-add"/></svg><svg class="mini"><use href="#i-refresh"/></svg><svg class="mini"><use href="#i-filter"/></svg><svg class="mini"><use href="#i-collapse"/></svg>
                    <svg class="mini" viewBox="0 0 24 24"><use href="#i-info"/><text x="9" y="18" class="svg-i">i</text></svg>
                </div>
                <div class="treebox">
                    <div class="tree">
                        <div class="row"><i class="arr open"></i><svg class="ti"><use href="#i-star"/></svg><span>Favorites</span></div>
                        <div class="row l1"><i class="arr open"></i><svg class="ti"><use href="#i-folderopen"/></svg><span>/Volumes/D/arcdata/_geo109</span></div>
                        <div class="row l2"><i class="arr"></i><svg class="ti"><use href="#i-folder"/></svg><span>L2</span></div>
                        <div class="row l2"><i class="arr open"></i><svg class="ti"><use href="#i-folderopen"/></svg><span>L3</span></div>
                        <div class="row l3"><i class="arr open"></i><svg class="ti"><use href="#i-dbw"/></svg><span>census.gpkg</span></div>
                        <div class="row l4"><i class="arr"></i><svg class="ti"><use href="#i-blobw"/></svg><span>ky_census_blocks</span></div>
                        <div class="row l4"><i class="arr"></i><svg class="ti"><use href="#i-blobw"/></svg><span>ky_counties</span></div>
                        <div class="row l4"><i class="arr"></i><svg class="ti"><use href="#i-blobw"/></svg><span>us_census_counties</span></div>
                        <div class="row l4"><i class="arr"></i><svg class="ti"><use href="#i-blobw"/></svg><span>us_states</span></div>
                        <div class="row l4 sel"><i class="arr"></i><svg class="ti"><use href="#i-blobt"/></svg><span>world_countries</span></div>
                        <div class="row l3"><i class="arr none"></i><svg class="ti"><use href="#i-blobb"/></svg><span>temp.geojson</span></div>
                        <div class="row"><i class="arr"></i><svg class="ti"><use href="#i-bookm"/></svg><span>Spatial Bookmarks</span></div>
                        <div class="row"><i class="arr"></i><svg class="ti"><use href="#i-home"/></svg><span>Home</span></div>
                        <div class="row"><i class="arr"></i><svg class="ti"><use href="#i-folder"/></svg><span>/</span></div>
                        <div class="row"><i class="arr"></i><svg class="ti"><use href="#i-folder"/></svg><span>/Volumes</span></div>
                        <div class="row"><i class="arr"></i><svg class="ti"><use href="#i-gpk"/></svg><span>GeoPackage</span></div>
                        <div class="row"><i class="arr"></i><svg class="ti"><use href="#i-feather"/></svg><span>SpatiaLite</span></div>
                        <div class="row"><i class="arr"></i><svg class="ti"><use href="#i-elephant"/></svg><span>PostGIS</span></div>
                        <div class="row"><i class="arr none"></i><svg class="ti"><use href="#i-mssql"/></svg><span>MSSQL</span></div>
                        <div class="row"><i class="arr none"></i><svg class="ti"><use href="#i-oracle"/></svg><span>Oracle</span></div>
                        <div class="row"><i class="arr none"></i><svg class="ti" viewBox="0 0 24 24"><use href="#i-db2"/><text x="3" y="15.500" class="svg-d">DB2</text></svg><span>DB2</span></div>
                        <div class="row"><i class="arr open"></i><svg class="ti"><use href="#i-wms"/></svg><span>WMS/WMTS</span></div>
                        <div class="row l1"><i class="arr"></i><svg class="ti"><use href="#i-fork"/></svg><span>Boone County 2020</span></div>
                        <div class="row l1"><i class="arr"></i><svg class="ti"><use href="#i-fork"/></svg><span>hydro</span></div>
                    </div>
                    <div class="vscroll"><div class="thumb"></div></div>
                </div>
            </section>
            <section class="dock layers">
                <div class="dock-title"><span>Layers</span><svg class="dock-close"><use href="#i-close"/></svg></div>
                <div class="minibar minibar-l">
                    <svg class="mini on"><use href="#i-brush"/></svg><svg class="mini"><use href="#i-legend"/></svg><svg class="mini"><use href="#i-eye"/></svg><svg class="mini"><use href="#i-filter"/></svg><svg class="mini"><use href="#i-group"/></svg><i class="drop g12"></i><svg class="mini"><use href="#i-expand"/></svg><svg class="mini"><use href="#i-collapse"/></svg><svg class="mini"><use href="#i-remove"/></svg>
                </div>
                <div class="layertree">
                    <div class="layerrow">
                        <svg class="eye"><use href="#i-eyew"/></svg>
                        <span class="swatch"></span>
                        <span class="layername">world_countries</span>
                    </div>
                </div>
            </section>
        </div>

        <div class="canvas">
            <svg class="map" viewBox="404 146 977 919">
                <!-- traced by hand, coordinates are 3x the screen pixels -->
                <g class="land" transform="translate(410 370) scale(.33333)">
                    <path d="M50 148 90 158 130 170 110 180 75 178 50 178ZM50 127 72 130 67 135 50 133Z"/>
                    <path d="M150 172 170 155 200 138 232 128 270 136 352 141 395 150 420 140 470 137 490 150 530 152 560 158 600 150 640 148 690 155 720 160 745 172 770 168 790 180 770 195 725 205 712 225 735 242 805 250 825 285 838 240 860 215 905 205 930 235 960 255 985 265 1000 275 1012 262 1020 290 1038 315 1010 318 1000 300 990 312 960 295 940 330 905 335 880 350 860 375 855 395 848 415 818 440 825 483 815 488 800 450 760 447 720 453 695 475 690 500 700 522 735 538 770 515 772 545 800 565 800 590 835 620 820 625 790 600 750 575 710 555 650 540 620 510 590 480 565 445 598 500 570 470 545 430 515 410 490 380 483 345 495 312 465 285 420 250 385 215 350 212 290 210 240 225 170 262 60 283 165 250 210 225 165 215 158 195 190 180 145 172Z"/>
                    <path d="M850 620 880 595 930 590 975 610 1010 640 1050 650 1060 690 1110 700 1175 730 1170 760 1145 790 1135 850 1080 875 1060 920 1030 950 1000 980 965 990 945 1020 935 1060 905 1100 945 1105 900 1110 865 1090 860 1040 880 960 905 860 900 825 860 790 820 720 825 680 850 650Z"/>
                    <path d="M885 75 950 60 1000 50 1090 40 1280 40 1355 48 1300 60 1285 100 1240 140 1175 170 1130 190 1105 215 1075 205 1040 175 1030 135 1000 110 950 95Z"/>
                    <path d="M775 112 815 108 860 125 925 150 968 165 950 195 915 175 870 165 850 145 800 150 775 135ZM480 125 520 110 610 115 640 145 580 155 500 130ZM495 95 590 72 600 85 540 100ZM630 70 700 75 690 100 650 90ZM700 55 830 40 960 40 900 65 800 85 720 70ZM715 110 745 120 720 150 690 130ZM480 170 530 165 510 178ZM540 205 600 193 575 208Z"/>
                    <path d="M1260 175 1300 168 1342 172 1320 188 1275 188ZM790 505 830 503 870 525 840 518ZM875 535 915 530 915 542 878 542ZM985 300 1020 310 1038 315 1008 320ZM1370 280 1400 255 1425 230 1445 270 1460 290 1420 300 1405 285 1395 272ZM1368 262 1388 252 1388 277 1368 282ZM1378 348 1405 345 1370 370Z"/>
                    <path d="M1205 375 1217 378 1213 382ZM1230 380 1248 386 1242 390ZM205 510 235 524 245 534 231 528ZM735 685 750 682 755 692 741 692ZM975 1082 1000 1082 990 1088ZM1150 1100 1168 1105 1164 1109ZM1085 1150 1097 1152 1093 1156ZM1030 1305 1080 1285 1115 1295 1085 1308ZM175 1295 210 1300 190 1303Z"/>
                    <path class="lake" d="M740 312 790 310 830 330 800 350 770 358 770 325ZM685 262 697 285 690 285Z"/>
                    <path class="line" d="M352 140V215M495 302H700L745 312M545 430 600 437 630 435 660 455 690 480M715 555 745 515 770 515M722 550 772 545M760 580 800 565M880 600 885 625 920 650 925 675 905 680 905 710 875 740 905 765 940 760 975 795 1000 820 1000 855 1025 880 1020 900 1005 915 995 945 1010 955M925 675 950 650 975 625 985 655 1000 665 1030 660 1050 650M820 690 860 675 905 710M905 765 910 820 920 855 965 850 1000 890M905 855 900 960 875 1020 890 1100M1005 915 1035 935 1015 955 995 945"/>
                    <path class="coast" d="M1030 135 1040 175 1075 205 1105 215M1230 130 1290 80M385 215 465 285 495 312M865 1005 860 1070 905 1105M700 55 830 42M870 48 960 42M960 170 900 140M1090 40 1280 40M1045 380 1030 400"/>
                    <path d="M50 1335 240 1340 175 1330 95 1320 200 1312 300 1305 250 1300 220 1282 300 1270 350 1265 460 1252 530 1258 640 1262 690 1245 700 1265 820 1250 930 1235 925 1210 960 1190 1015 1165 965 1210 975 1250 960 1285 870 1292 800 1290 860 1305 940 1318 985 1330 1100 1315 1170 1298 1270 1300 1170 1285 1240 1270 1320 1250 1420 1230 1500 1228 1700 1222 1750 1215 1850 1193 1990 1208 1965 1250 2060 1205 2240 1190 2460 1195 2610 1210 2770 1238 2705 1270 2760 1285 2675 1305 2720 1322 2843 1335 2843 1380 50 1380Z"/>
                </g>
                <g class="land" transform="translate(880 370) scale(.33333)">
                    <path d="M-32 348 -5 342 8 325 -8 308 25 292 60 272 92 262 102 238 118 236 122 248 135 246 100 235 78 212 95 190 135 158 170 140 230 128 290 147 355 155 330 165 312 175 360 188 378 155 420 150 445 165 500 165 550 150 565 118 600 112 590 130 610 165 640 158 650 135 685 122 720 100 790 105 860 118 905 100 960 110 1030 127 1090 130 1140 125 1220 128 1280 138 1350 145 1433 143 1433 178 1395 190 1340 205 1310 200 1280 250 1250 285 1245 240 1265 215 1300 200 1255 210 1210 218 1150 240 1095 252 1120 268 1142 265 1120 310 1085 350 1045 378 1042 418 1018 412 1005 378 975 375 955 385 985 405 992 435 975 482 935 505 895 520 880 545 865 525 848 510 870 535 888 562 855 612 825 572 803 562 815 590 838 645 808 612 795 565 770 555 755 510 720 515 670 560 640 620 600 535 570 490 515 490 478 478 460 488 412 448 440 487 470 497 497 510 440 545 375 582 350 550 300 458 310 415 295 405 250 392 250 372 222 395 205 365 152 340 175 385 160 375 120 332 92 312 50 325 25 345 2 378 -5 402 -32 395Z"/>
                    <path d="M305 440 300 460 340 540 372 587 430 590 405 640 355 700 345 740 352 795 312 810 310 860 280 900 232 945 180 948 150 860 128 815 135 730 108 680 110 648 70 640 20 630 -20 648 -60 620 -95 570 -95 515 -60 470 -30 440 -10 412 40 395 110 395 118 420 190 432 225 440Z"/>
                    <path d="M378 840 420 780 428 790 410 860 385 880 372 860ZM915 875 940 845 985 825 1020 795 1050 775 1095 775 1090 800 1130 815 1140 765 1175 820 1225 885 1220 930 1180 980 1140 975 1110 950 1095 945 1060 925 1000 935 935 950 925 900ZM1155 990 1185 995 1175 1018 1162 1015ZM1375 950 1420 975 1395 995 1380 975ZM1330 1040 1395 995 1385 1015 1345 1045ZM1055 685 1130 700 1170 730 1205 760 1130 750 1090 720ZM885 680 945 630 960 650 955 695 935 710 895 705ZM775 640 830 680 860 725 845 725 800 680ZM860 730 1000 748 960 750 870 740ZM960 690 1010 670 985 690 990 725 970 730ZM970 540 985 535 985 580 1015 610 1015 630 975 590ZM655 610 672 625 660 635ZM1040 425 1090 400 1130 370 1135 340 1145 345 1130 385 1090 420ZM1135 340 1170 340 1140 355ZM1135 265 1150 300 1140 335ZM975 490 982 490 972 510ZM880 530 895 525 890 540ZM120 65 245 60 200 85 150 85ZM440 125 480 95 570 85 500 110 460 135ZM385 55 540 50 490 60 420 62ZM740 55 800 60 860 80 780 70ZM1100 95 1160 100 1120 105ZM150 385 175 390 155 395ZM1433 810 1415 820 1420 830 1433 827ZM1020 700 1060 695 1050 710Z"/>
                    <path d="M575 1060 585 1063 581 1069ZM605 1090 609 1092 606 1095ZM470 840 485 840 479 844ZM1310 840 1335 855 1330 859ZM1320 270 1340 275 1332 277ZM1380 270 1420 278 1410 281ZM1200 700 1290 765 1280 755Z"/>
                    <path class="lake" d="M255 350 285 325 335 335 370 345 385 365 320 360 270 365ZM405 325 445 320 440 345 455 390 425 395 415 355ZM505 322 517 322 511 328ZM610 325 650 320 615 328ZM845 280 885 255 880 270ZM285 690 300 685 295 700 285 700ZM165 258 170 235 195 205 205 180 232 172 205 208 215 218 275 208 290 210 255 225 215 250 180 255Z"/>
                    <path class="line" d="M340 295 400 300 440 290 505 265 580 255 625 265 710 300 780 290 830 282 900 295 940 300 965 270 1010 270 1055 305 1080 310 1075 340 1042 358M710 300 750 335 780 350 850 358 900 345 965 315 930 300M400 300 470 335 560 350 620 350 680 320 710 300M620 395 650 440 720 470 780 460 800 465 770 490 770 555M720 470 725 515M800 465 830 510 850 510 880 545M620 350 620 395M620 395 590 390 510 420 470 360M510 420 510 480M385 378 420 440 412 448M620 395 610 440 570 490M310 415 360 430 410 425 385 378M255 392 320 385 385 378 395 350M375 550 440 530 497 510M412 448 440 490 440 530M345 295 235 310 145 290M235 310 225 245 260 250M145 290 90 320M120 210 185 150 225 130 270 170 280 205M145 290 150 340M225 315 250 365M0 412 70 530 110 500 155 505 225 525 230 440M225 510H320V560M155 505 145 600 210 600M70 530-50 470-60 510-95 515M-50 510-40 560 0 570 70 565 145 600M150 650 245 645 270 660 355 650M245 645 210 600M280 600 300 610 355 650 415 620M320 560 300 610M135 730 215 775 210 815 130 815M200 820 195 890 250 880 285 840 312 810M245 645 265 720 300 770 345 740M215 775 260 780 300 810M-20 648-20 600M15 630 15 590M50 635 45 595M110 648 120 600 145 600M1130 700V750"/>
                    <path class="coast" d="M78 212 95 190 135 158 170 140M385 55 540 50M120 65 200 62M1250 285 1290 270M230 370 235 400M570 360 595 368M-95 570-80 590"/>
                </g>
            </svg>
        </div>

        <aside class="right">
            <div class="dock-title dock-title-r"><span>Layer Styling</span><svg class="dock-close"><use href="#i-close"/></svg></div>
            <div class="combo combo-layer"><svg class="cico"><use href="#i-blobw"/></svg><span>world_countries</span><b>▾</b></div>
            <div class="stylebody">
                <div class="tabs">
                    <div class="tab active"><svg><use href="#i-brush"/></svg></div>
                    <div class="tab"><svg viewBox="0 0 24 24"><use href="#i-labelt"/><text x="6.500" y="16" class="svg-k">abc</text></svg></div>
                    <div class="tab"><svg viewBox="0 0 24 24"><use href="#i-labelw"/><text x="3" y="16" class="svg-k">abc</text></svg></div>
                    <div class="tab"><svg><use href="#i-cube"/></svg></div>
                    <div class="tab"><svg><use href="#i-tree"/></svg></div>
                    <div class="tab"><svg><use href="#i-hist"/></svg></div>
                </div>
                <div class="panel">
                    <div class="combo"><svg class="cico"><use href="#i-cat"/></svg><span>Single Symbol</span><b>▾</b></div>
                    <div class="symrow">
                        <div class="preview"><div class="preview-box"></div></div>
                        <div class="symtree">
                            <div class="symfill"><i class="arr open"></i><span class="mini-swatch"></span><strong>Fill</strong></div>
                            <div class="symsimple"><span class="mini-swatch"></span><span>Simple Fill</span></div>
                        </div>
                        <div class="symbtns">
                            <div class="sbtn"><svg><use href="#i-plus"/></svg></div><div class="sbtn"><svg><use href="#i-up"/></svg></div>
                            <div class="sbtn"><svg><use href="#i-minus"/></svg></div><div class="sbtn"><svg><use href="#i-down"/></svg></div>
                            <div class="sbtn"><svg><use href="#i-dupd"/></svg></div><div class="sbtn"><svg><use href="#i-lock"/></svg></div>
                        </div>
                    </div>
                    <div class="form">
                        <div class="frow frow-unit"><label>Unit</label><div class="combo fld"><span>Millimeters</span><b>▾</b></div></div>
                        <div class="frow"><label>Opacity</label><div class="slider"><div class="slider-fill"></div></div><div class="combo spin"><span>100.0 %</span><b>▴<br>▾</b></div></div>
                        <div class="frow frow-color"><label>Color</label><div class="colorbtn"><div class="colorbar"></div><b>▾</b></div></div>
                    </div>
                    <div class="searchrow">
                        <div class="combo search"><svg class="cico"><use href="#i-mag"/></svg><span>Favorites</span><svg class="clear"><use href="#i-clear"/></svg><b>▾</b></div>
                        <svg class="stylemgr" viewBox="0 0 24 24"><use href="#i-style"/><text x="14" y="22" class="svg-a">a</text></svg>
                    </div>
                    <div class="symtable">
                        <div class="th"><span class="col-name">Name</span><span class="col-tags">Tags</span></div>
                        <div class="tr"><span class="sw sw-grad"></span><span class="col-name">gradient ...</span><span class="col-tags">Showcase</span></div>
                        <div class="tr"><span class="sw sw-gray"></span><span class="col-name">gray 3 fill</span><span class="col-tags">Grayscale</span></div>
                        <div class="tr"><span class="sw sw-hash"></span><span class="col-name">hashed b...</span><span class="col-tags">Grayscale</span></div>
                        <div class="tr"><span class="sw sw-hash2"></span><span class="col-name">hashed b...</span><span class="col-tags">Grayscale</span></div>
                        <div class="tr"><span class="sw sw-hash3"></span><span class="col-name">hashed b...</span><span class="col-tags">Grayscale</span></div>
                        <div class="tr"><span class="sw"></span><span class="col-name">laser</span><span class="col-tags">laser</span></div>
                        <div class="tr"><span class="sw sw-ob"></span><span class="col-name">outline bl...</span><span class="col-tags">Colorful</span></div>
                        <div class="tr"><span class="sw sw-og"></span><span class="col-name">outline gr...</span><span class="col-tags">Colorful</span></div>
                        <div class="tr"><span class="sw sw-or"></span><span class="col-name">outline red</span><span class="col-tags">Colorful</span></div>
                        <div class="tr"><span class="sw sw-ox"></span><span class="col-name">outline x...</span><span class="col-tags">Showcase</span></div>
                        <div class="tr"><span class="sw sw-pd"></span><span class="col-name">pattern d...</span><span class="col-tags">Grayscale</span></div>
                        <div class="tr"><span class="sw sw-pz"></span><span class="col-name">pattern z...</span><span class="col-tags">Showcase</span></div>
                        <div class="tr"><span class="sw sw-sb"></span><span class="col-name">simple bl...</span><span class="col-tags">Colorful</span></div>
                        <div class="tr"><span class="sw sw-sg"></span><span class="col-name">simple gr...</span><span class="col-tags">Colorful</span></div>
                        <div class="tr"><span class="sw sw-sr"></span><span class="col-name">simple re...</span><span class="col-tags">Colorful</span></div>
                    </div>
                    <div class="tablefoot">
                        <svg class="vbtn"><use href="#i-grid"/></svg>
                        <svg class="vbtn vbtn-on"><use href="#i-list"/></svg>
                        <button class="pbtn save">Save Symbol...</button>
                        <button class="pbtn adv">Advanced <b>▾</b></button>
                    </div>
                    <div class="rendering"><i class="tri"></i><strong>Layer Rendering</strong></div>
                    <div class="applyrow">
                        <div class="abtn"><svg><use href="#i-undo"/></svg></div>
                        <div class="abtn"><svg><use href="#i-redo"/></svg></div>
                        <span class="check"></span>
                        <span class="live">Live update</span>
                        <button class="pbtn apply">Apply</button>
                    </div>
                </div>
            </div>
            <div class="bottomtabs">
                <div class="btab btab-on">Layer Styling</div>
                <div class="btab btab-off">Processing Toolbox</div>
            </div>
        </aside>
    </div>

    <footer class="status">
        <div class="locator"><svg class="loc-ic"><use href="#i-mag"/></svg><span>Type to locate (⌘K)</span></div>
        <div class="st-right">
            <span class="st-coord">Coordinate</span>
            <div class="st-box st-coordval">-186.3,-30.8</div>
            <svg class="st-ic"><use href="#i-hand2"/></svg>
            <span class="st-scale">Scale</span>
            <div class="st-box st-scaleval">1:116995464<b>▾</b></div>
            <svg class="st-lock"><use href="#i-lockw"/></svg>
            <span class="st-magn">Magnifier</span>
            <div class="st-box st-magval">100%<b>▴<br>▾</b></div>
            <span class="st-rot">Rotation</span>
            <div class="st-box st-rotval">0.0 °<b>▴<br>▾</b></div>
            <span class="check st-check"></span>
            <span class="st-render">Render</span>
            <svg class="st-globe"><use href="#i-world"/></svg>
            <span class="st-epsg">EPSG:4326</span>
            <svg class="st-bubble"><use href="#i-bubble"/></svg>
        </div>
    </footer>

    <!-- context menu and the tutorial's annotations sit on top of everything -->
    <div class="menu">
        <div class="mi"><svg class="mi-ic"><use href="#i-glassw"/></svg><span><u>Z</u>oom to Layer</span></div>
        <div class="mi off"><svg class="mi-ic"><use href="#i-glassd"/></svg><span><u>Z</u>oom to Selection</span></div>
        <div class="mi"><svg class="mi-ic"><use href="#i-overview"/></svg><span><u>S</u>how in Overview</span></div>
        <div class="mi"><span class="mi-pad"></span><span>Show Feature Count</span></div>
        <div class="mi"><span class="mi-pad"></span><span><u>C</u>opy Layer</span></div>
        <div class="mi"><span class="mi-pad"></span><span>Rename Layer</span></div>
        <div class="msep"></div>
        <div class="mi"><svg class="mi-ic"><use href="#i-dup"/></svg><span><u>D</u>uplicate Layer</span></div>
        <div class="mi"><svg class="mi-ic"><use href="#i-remove"/></svg><span><u>R</u>emove Layer...</span></div>
        <div class="msep"></div>
        <div class="mi hi"><svg class="mi-ic"><use href="#i-table"/></svg><span><u>O</u>pen Attribute Table</span></div>
        <div class="mi"><svg class="mi-ic"><use href="#i-pensm"/></svg><span>Toggle Editing</span></div>
        <div class="mi"><span class="mi-pad"></span><span><u>F</u>ilter...</span></div>
        <div class="mi"><span class="mi-pad"></span><span>Change Data Source...</span></div>
        <div class="msep"></div>
        <div class="mi"><span class="mi-pad"></span><span><u>S</u>et Layer Scale Visibility...</span></div>
        <div class="mi sub"><span class="mi-pad"></span><span>Layer CRS</span></div>
        <div class="msep"></div>
        <div class="mi sub"><span class="mi-pad"></span><span>Export</span></div>
        <div class="msep"></div>
        <div class="mi sub"><span class="mi-pad"></span><span>Styles</span></div>
        <div class="mi"><span class="mi-pad"></span><span><u>P</u>roperties...</span></div>
    </div>
    <div class="yellowbox"></div>
    <svg class="callout-arrow" viewBox="0 0 24 44"><path d="M1 1l19 13-7 2 10 27-4 1-10-26-6 4z" fill="#fdf287"/></svg>
    <div class="callout">Right click</div>
</div>
</body>
</html>
```

FILE: styles.css
```css
* {
    box-sizing: border-box;
}
body {
    margin: 0;
    background: #323232;
    font-family: "Liberation Sans", Arial, sans-serif;
    font-size: 13px;
    color: #c4c4c4;
}
.defs {
    position: absolute;
    width: 0;
    height: 0;
}
.svg-a { font: 10px "Liberation Sans", sans-serif; fill: #ccc; }
.svg-o { font: bold 8px "Liberation Sans", sans-serif; fill: #333; }
.svg-i { font: italic bold 16px "Liberation Serif", serif; fill: #fff; }
.svg-k { font: bold 8px "Liberation Sans", sans-serif; fill: #222; }
.svg-m { font: bold 8px "Liberation Sans", sans-serif; fill: #2c2c2c; }
.svg-w { font: bold 8px "Liberation Sans", sans-serif; fill: #fff; }
.svg-q { font: bold 14px "Liberation Sans", sans-serif; fill: #fff; }
.svg-d { font: 8px "Liberation Sans", sans-serif; fill: #fff; }

.app {
    position: relative;
    width: 1910px;
    height: 1094px;
    display: flex;
    flex-direction: column;
    overflow: hidden;
    background: #323232;
}

/* title bar */
.titlebar {
    height: 29px;
    flex: none;
    position: relative;
    display: flex;
    align-items: center;
    justify-content: center;
    border-top: 1px solid #6a6a6a;
    border-bottom: 1px solid #0d0d0d;
    background: #323232;
}
.lights {
    position: absolute;
    left: 7px;
    top: 8px;
    display: flex;
    gap: 8px;
}
.light {
    width: 12px;
    height: 12px;
    border-radius: 50%;
}
.red { background: #fa5f56; }
.amber { background: #fdb72e; }
.green { background: #28c83f; }
.wintitle {
    font-weight: bold;
    font-size: 13px;
    color: #a2a2a2;
}

/* toolbars */
.toolbars {
    height: 117px;
    padding-top: 1px;
    flex: none;
}
.bar {
    height: 34px;
    padding-left: 2px;
    display: flex;
    align-items: center;
}
.bar-2 { margin-top: 6px; }
.bar-3 { margin-top: 4px; }
.ic {
    width: 24px;
    height: 24px;
    margin: 0 5px;
    flex: none;
}
.d { opacity: .8; }
.on {
    outline: 1px solid #a96f2a;
    outline-offset: 4px;
}
.dimbox { outline-color: #6d5228; }
.bar i {
    display: block;
    height: 24px;
    flex: none;
}
.g2 { width: 2px; }
.g3 { width: 3px; }
.g4 { width: 4px; }
.g5 { width: 5px; }
.g6 { width: 6px; }
.g7 { width: 7px; }
.g8 { width: 8px; }
.g9 { width: 9px; }
.g10 { width: 10px; }
.g11 { width: 11px; }
.g12 { width: 12px; }
.g13 { width: 13px; }
.g14 { width: 14px; }
.g16 { width: 16px; }
.ln {
    background: linear-gradient(#4b4b4b, #4b4b4b) center / 1px 18px no-repeat;
}
.drop {
    position: relative;
}
.drop::after {
    content: "";
    position: absolute;
    left: calc(50% - 2px);
    top: 10px;
    border: 2px solid transparent;
    border-top: 4px solid #c4c4c4;
}
.tbspin,
.tbcombo {
    height: 24px;
    background: #2d2d2d;
    border: 1px solid #252525;
    color: #5e5e5e;
    font-size: 13px;
    display: flex;
    align-items: center;
    justify-content: space-between;
    padding: 0 4px;
    flex: none;
}
.tbspin {
    width: 93px;
    margin-left: 1px;
}
.tbcombo {
    width: 109px;
    margin-left: 2px;
}
.tbspin b,
.tbcombo b {
    font-size: 7px;
    line-height: 9px;
    font-weight: normal;
    color: #aaa;
}
.ic-l { margin-left: 3px; }

/* main area */
.main {
    height: 919px;
    flex: none;
    display: flex;
}
.left {
    width: 404px;
    flex: none;
    display: flex;
    flex-direction: column;
}
.dock {
    display: flex;
    flex-direction: column;
}
.browser { height: 484px; }
.layers { height: 435px; }
.dock-title {
    height: 16px;
    flex: none;
    display: flex;
    align-items: center;
    justify-content: center;
    position: relative;
    padding-right: 34px;
    font-size: 11px;
    letter-spacing: .2px;
    color: #979797;
}
.dock-close {
    position: absolute;
    right: 11px;
    top: 2px;
    width: 10px;
    height: 10px;
}
.minibar {
    height: 32px;
    flex: none;
    display: flex;
    align-items: center;
}
.mini {
    width: 16px;
    height: 16px;
    margin: 0 5px;
    flex: none;
}
.minibar .mini.on {
    outline-offset: 4px;
}
.minibar i {
    display: block;
    height: 16px;
}
.minibar .drop::after {
    top: 5px;
}
.treebox {
    height: 428px;
    width: 397px;
    display: flex;
    background: #232323;
    border: 1px solid #4a4a4a;
    border-left: 0;
}
.tree {
    width: 387px;
    height: 100%;
    padding-top: 1px;
    overflow: hidden;
    flex: none;
}
.row {
    height: 18px;
    display: flex;
    align-items: center;
    padding-left: 5px;
    letter-spacing: .35px;
    white-space: nowrap;
    color: #c8c8c8;
}
.l1 { padding-left: 25px; }
.l2 { padding-left: 45px; }
.l3 { padding-left: 65px; }
.l4 { padding-left: 85px; }
.row.sel {
    width: 268px;
    background: #126a11;
    color: #a8e6a8;
}
.arr {
    display: block;
    width: 10px;
    height: 10px;
    flex: none;
    position: relative;
}
.arr::after {
    content: "";
    position: absolute;
    left: 3px;
    top: 2px;
    border: 3px solid transparent;
    border-left: 5px solid #6a6a6a;
}
.arr.open::after {
    left: 2px;
    top: 3px;
    border: 3px solid transparent;
    border-top: 5px solid #6a6a6a;
}
.arr.none::after { display: none; }
.ti {
    width: 15px;
    height: 15px;
    margin-left: 8px;
    margin-right: 7px;
    flex: none;
}
.vscroll {
    width: 8px;
    margin-top: 1px;
    height: 424px;
    background: #2b2b2b;
    border: 1px solid #3a3a3a;
}
.thumb {
    height: 137px;
    background: #3f3f3f;
}
.layertree {
    height: 387px;
    width: 397px;
    background: #232323;
    border-top: 1px solid #4a4a4a;
    flex: none;
}
.layerrow {
    height: 25px;
    background: #126a11;
    display: flex;
    align-items: center;
    padding-left: 23px;
}
.eye {
    width: 16px;
    height: 16px;
}
.swatch {
    width: 16px;
    height: 16px;
    margin-left: 5px;
    background: #e8733d;
    border: 1px solid #cf6a38;
}
.layername {
    margin-left: 6px;
    font-weight: bold;
    letter-spacing: .35px;
    color: #b9f0b9;
    text-decoration: underline;
}

/* map canvas */
.canvas {
    width: 977px;
    flex: none;
    background: #fff;
}
.map {
    display: block;
    width: 100%;
    height: 100%;
}
.land {
    fill: #e8724a;
    stroke: #4d3a33;
    stroke-width: 2;
    stroke-linejoin: round;
}
.land .lake {
    fill: #fff;
    stroke-width: 1.500;
}
.land .line {
    fill: none;
}
.land .coast {
    fill: none;
    stroke: #3a3230;
    stroke-width: 3.500;
}

/* layer styling panel */
.right {
    width: 529px;
    flex: none;
    padding-left: 11px;
    padding-right: 3px;
    display: flex;
    flex-direction: column;
}
.dock-title-r {
    height: 21px;
    padding: 0 26px 5px 0;
}
.dock-title-r .dock-close {
    right: -2px;
    top: 3px;
}
.combo {
    height: 22px;
    flex: none;
    display: flex;
    align-items: center;
    background: linear-gradient(#5a5a5a, #474747);
    border: 1px solid #252525;
    color: #b8b8b8;
    padding: 0 5px 0 3px;
    letter-spacing: .3px;
}
.combo b {
    margin-left: auto;
    font-size: 7px;
    line-height: 8px;
    font-weight: normal;
    color: #ddd;
}
.cico {
    width: 15px;
    height: 15px;
    margin: 0 6px 0 1px;
    flex: none;
}
.combo-layer { width: 515px; }
.stylebody {
    margin-top: 8px;
    height: 840px;
    display: flex;
}
.tabs {
    width: 36px;
    flex: none;
    background: #232323;
    border: 1px solid #474747;
    border-bottom: 1px solid #474747;
}
.tab {
    height: 30px;
    display: flex;
    align-items: center;
    justify-content: center;
}
.tab svg {
    width: 22px;
    height: 22px;
}
.tab.active {
    background: #126a11;
    height: 30px;
}
.panel {
    flex: 1;
    padding-left: 4px;
    min-width: 0;
}
.symrow {
    margin-top: 8px;
    height: 120px;
    display: flex;
}
.preview {
    width: 119px;
    flex: none;
    padding: 35px 0 0 27px;
}
.preview-box {
    width: 59px;
    height: 59px;
    background: #e8734d;
}
.symtree {
    width: 288px;
    height: 112px;
    margin-top: 8px;
    flex: none;
    padding: 1px;
    background: #232323;
    border: 1px solid #5a5a5a;
}
.symfill {
    height: 18px;
    display: flex;
    align-items: center;
    padding-left: 6px;
    background: #126a11;
    color: #e4f5e4;
}
.symfill .arr { margin-right: 5px; }
.symfill strong { margin-left: 7px; }
.mini-swatch {
    width: 16px;
    height: 16px;
    background: #e8734d;
    border: 1px solid #c9623f;
    flex: none;
}
.symsimple {
    height: 18px;
    display: flex;
    align-items: center;
    padding-left: 43px;
    letter-spacing: .3px;
    color: #d8d8d8;
}
.symsimple span + span { margin-left: 5px; }
.symbtns {
    margin-left: 7px;
    display: grid;
    grid-template-columns: 27px 27px;
    grid-auto-rows: 22px;
    gap: 6px 7px;
}
.sbtn {
    border: 1px solid #2a2a2a;
    display: flex;
    align-items: center;
    justify-content: center;
}
.sbtn svg {
    width: 15px;
    height: 15px;
}
.form {
    margin-top: 25px;
    width: 466px;
}
.frow {
    display: flex;
    align-items: center;
    height: 22px;
    margin-bottom: 2px;
    letter-spacing: .3px;
}
.frow label { width: 49px; flex: none; }
.fld { flex: 1; padding-left: 3px; }
.slider {
    width: 313px;
    height: 9px;
    flex: none;
    background: #555;
}
.slider-fill {
    width: 291px;
    height: 100%;
    background: #126a11;
}
.spin {
    width: 98px;
    margin-left: 6px;
    padding-left: 4px;
}
.frow-color { height: 26px; }
.colorbtn {
    flex: 1;
    height: 26px;
    display: flex;
    align-items: center;
    padding: 0 4px 0 2px;
    background: #3a3a3a;
    border: 1px solid #252525;
}
.colorbar {
    width: 400px;
    height: 15px;
    border-radius: 3px;
    background: #e8734d;
}
.colorbtn b {
    margin-left: auto;
    font-size: 7px;
    font-weight: normal;
    color: #ddd;
}
.searchrow {
    margin-top: 76px;
    display: flex;
    align-items: center;
}
.search {
    width: 435px;
    padding-left: 10px;
}
.search .cico { margin-right: 7px; }
.clear {
    width: 14px;
    height: 14px;
    margin-left: auto;
    margin-right: 33px;
}
.search b { margin-left: 0; }
.stylemgr {
    width: 16px;
    height: 16px;
    margin-left: 10px;
}
.symtable {
    margin-top: 6px;
    width: 466px;
    height: 381px;
    background: #232323;
    border: 1px solid #555;
    padding: 1px;
}
.th {
    height: 18px;
    display: flex;
    align-items: center;
    background: #3a3a3a;
    border-bottom: 1px solid #575757;
    font-size: 10px;
    color: #a0a0a0;
    margin-bottom: 2px;
}
.th .col-name {
    width: 99px;
    margin-left: 4px;
    padding: 0;
    border-right: 1px solid #5a5a5a;
}
.th .col-tags { margin-left: 3px; }
.tr {
    height: 18px;
    display: flex;
    align-items: center;
    font-size: 10px;
    color: #c8c8c8;
}
.sw {
    width: 14px;
    height: 14px;
    margin-left: 24px;
    flex: none;
    border-radius: 1px;
}
.tr .col-name {
    width: 56px;
    margin-left: 8px;
    flex: none;
    white-space: nowrap;
}
.sw-grad { background: linear-gradient(45deg, #f09a30, #8020a0); }
.sw-gray { background: #a0a0a0; border: 1px solid #c8c8c8; }
.sw-hash { background: repeating-linear-gradient(135deg, #111 0 3px, #333 3px 4px); }
.sw-hash2 { background: repeating-linear-gradient(45deg, #111 0 3px, #333 3px 4px); }
.sw-hash3 { background: repeating-linear-gradient(45deg, #111 0 3px, #2c2c2c 3px 4px); }
.sw-ob { border: 2px solid #3c84c4; background: #1e1e1e; }
.sw-og { border: 2px solid #4aac4a; background: #1e1e1e; }
.sw-or { border: 2px solid #e02020; background: #1e1e1e; }
.sw-ox { background: radial-gradient(circle, #fff 60%, #d82020 62%); }
.sw-pd { background: #151515; }
.sw-pz { background: linear-gradient(135deg, #f0b040 50%, #f07020 50%); }
.sw-sb { background: #3a84c8; }
.sw-sg { background: #4ab04a; }
.sw-sr { background: #ec1c1c; }
.tablefoot {
    margin-top: 6px;
    height: 25px;
    display: flex;
    align-items: center;
}
.vbtn {
    width: 14px;
    height: 14px;
    margin-left: 5px;
    flex: none;
}
.vbtn-on {
    margin-left: 11px;
    width: 15px;
    height: 15px;
    outline: 1px solid #a96f2a;
    outline-offset: 4px;
}
.pbtn {
    height: 24px;
    padding: 0;
    background: #323232;
    border: 1px solid #2a2a2a;
    color: #bdbdbd;
    font: 13px "Liberation Sans", Arial, sans-serif;
    letter-spacing: .2px;
}
.pbtn b {
    font-size: 7px;
    font-weight: normal;
}
.save {
    width: 96px;
    margin-left: 234px;
}
.adv {
    width: 83px;
    margin-left: 7px;
}
.rendering {
    margin-top: 21px;
    height: 20px;
    display: flex;
    align-items: center;
    color: #dcdcdc;
    letter-spacing: .3px;
}
.tri {
    width: 0;
    height: 0;
    margin: 0 11px 0 5px;
    border: 4px solid transparent;
    border-left: 6px solid #555;
    border-right: 0;
}
.applyrow {
    margin-top: 9px;
    height: 24px;
    display: flex;
    align-items: center;
}
.abtn {
    width: 25px;
    height: 24px;
    margin-right: 7px;
    background: #474747;
    border: 1px solid #2a2a2a;
    display: flex;
    align-items: center;
    justify-content: center;
}
.abtn svg {
    width: 15px;
    height: 15px;
}
.check {
    width: 13px;
    height: 13px;
    background: #126a11;
    flex: none;
}
.applyrow .check { margin-left: 271px; }
.live {
    margin-left: 8px;
    letter-spacing: .3px;
}
.apply {
    width: 42px;
    margin-left: auto;
}
.bottomtabs {
    height: 28px;
    margin-left: -4px;
    display: flex;
    align-items: flex-start;
}
.btab {
    border: 1px solid #4a4a4a;
    border-top: 0;
    letter-spacing: .3px;
    color: #b8b8b8;
    text-align: center;
    white-space: nowrap;
}
.btab-on {
    height: 28px;
    width: 106px;
    padding-top: 8px;
}
.btab-off {
    height: 23px;
    width: 147px;
    padding-top: 5px;
    border-left: 0;
}

/* status bar */
.status {
    height: 29px;
    flex: none;
    display: flex;
    align-items: center;
    background: #3c3c3c;
    font-size: 11px;
    letter-spacing: .25px;
    color: #bcbcbc;
    padding: 2px 0 0 3px;
}
.locator {
    width: 212px;
    height: 22px;
    display: flex;
    align-items: center;
    background: #7a7a7a;
    border: 1px solid #555;
    color: #3a3a3a;
    font-size: 13px;
    letter-spacing: .3px;
}
.loc-ic {
    width: 12px;
    height: 12px;
    margin: 0 11px 0 8px;
}
.st-right {
    margin-left: auto;
    display: flex;
    align-items: center;
    white-space: nowrap;
}
.st-box {
    height: 22px;
    display: flex;
    align-items: center;
    justify-content: space-between;
    padding: 0 4px;
    background: #4a4a4a;
    border: 1px solid #2c2c2c;
    color: #a8a8a8;
}
.st-box b {
    font-size: 6px;
    line-height: 8px;
    font-weight: normal;
    color: #ccc;
}
.st-coord { width: 57px; }
.st-coordval {
    width: 85px;
    margin-left: 5px;
    background: #808080;
    color: #111;
    font-size: 12px;
    justify-content: center;
}
.st-ic {
    width: 14px;
    height: 16px;
    margin-left: 7px;
}
.st-scale { width: 30px; margin-left: 14px; }
.st-scaleval { width: 120px; margin-left: 3px; }
.st-lock {
    width: 12px;
    height: 15px;
    margin-left: 12px;
}
.st-magn { width: 51px; margin-left: 9px; }
.st-magval { width: 89px; margin-left: 3px; }
.st-rot { width: 43px; margin-left: 10px; }
.st-rotval { width: 92px; margin-left: 10px; }
.st-check { margin-left: 8px; }
.st-render { width: 38px; margin-left: 7px; }
.st-globe {
    width: 13px;
    height: 13px;
    margin-left: 13px;
}
.st-epsg { width: 60px; margin-left: 5px; }
.st-bubble {
    width: 16px;
    height: 16px;
    margin: 0 15px 0 24px;
}

/* context menu */
.menu {
    position: absolute;
    left: 203px;
    top: 693px;
    width: 209px;
    height: 398px;
    padding-top: 3px;
    background: #2f2f2f;
    border: 1px solid #0c0c0c;
    box-shadow: 0 4px 14px rgba(0, 0, 0, .35);
    letter-spacing: .15px;
    color: #bdbdbd;
}
.mi {
    height: 22px;
    display: flex;
    align-items: center;
    margin: 0 4px;
    position: relative;
    white-space: nowrap;
}
.mi.off { color: #5d5d5d; }
.mi.hi {
    background: #126a11;
    color: #9fe49f;
}
.mi-ic {
    width: 15px;
    height: 15px;
    margin-left: 1px;
    margin-right: 25px;
    flex: none;
}
.mi-pad {
    width: 41px;
    flex: none;
}
.mi.sub::after {
    content: "";
    position: absolute;
    right: 4px;
    top: 7px;
    border: 4px solid transparent;
    border-left: 5px solid #999;
    border-right: 0;
}
.msep {
    height: 3px;
    margin: 1px 9px -1px 14px;
    border-top: 1px solid #4c4c4c;
}
.yellowbox {
    position: absolute;
    left: 199px;
    top: 823px;
    width: 219px;
    height: 146px;
    border: 4px solid #fdf283;
}
.callout-arrow {
    position: absolute;
    left: 113px;
    top: 706px;
    width: 22px;
    height: 40px;
}
.callout {
    position: absolute;
    left: 27px;
    top: 741px;
    font-family: Lato, sans-serif;
    font-weight: 900;
    font-size: 39px;
    letter-spacing: 1.900px;
    line-height: 46px;
    color: #fdf58f;
    white-space: nowrap;
}
```
